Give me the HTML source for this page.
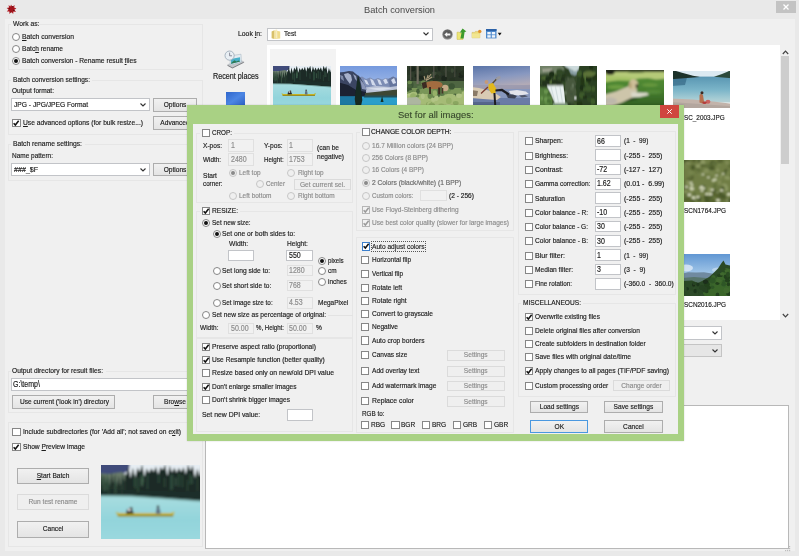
<!DOCTYPE html>
<html><head><meta charset="utf-8"><title>Batch conversion</title>
<style>
html,body{margin:0;padding:0;background:#f0f0f0;overflow:hidden}
#root{filter:blur(0.35px);position:relative;width:799px;height:556px;overflow:hidden;background:#f0f0f0;font-family:"Liberation Sans",sans-serif;font-size:7.8px;color:#1c1c1c}
#root div,#root span,#root svg.abs{position:absolute;box-sizing:border-box}
.t{-webkit-text-stroke:0.18px;white-space:pre;transform-origin:0 50%;line-height:10px;height:10px}
.bt{text-align:center;transform-origin:50% 50%}
.dist{color:#8c8c8c}
.cb{width:8.2px;height:8.2px;border:1px solid #868686;background:#fff}
.cb.dis{border-color:#b5b5b5;background:#f2f2f2}
.cb.foc{border-color:#3c7fcc}
.rb{width:8px;height:8px;border:1px solid #868686;background:#fff;border-radius:50%}
.rb.dis{border-color:#c6c6c6;background:#efefef}
.rb i{position:absolute;left:1.1px;top:1.1px;width:3.8px;height:3.8px;border-radius:50%}
.btn{border:1px solid #adadad;background:linear-gradient(#f1f1f1,#e4e4e4)}
.btn.dis{border-color:#dbdbdb;background:#efefef}
.btn.def{border-color:#4a98e0}
.in{border:1px solid #c2c4c8;background:#fff}
.in.dis{border-color:#e0e0e0;background:#f1f1f1}
.combo.dis{background:#e6e6e6;border-color:#c4c4c4}
.gb{border:1px solid #e6e6e6}
u{text-decoration:underline}
#t0{transform:scaleX(0.965)}
#t1{transform:scaleX(0.865)}
#t2{transform:scaleX(0.869)}
#t3{transform:scaleX(0.844)}
#t4{transform:scaleX(0.858)}
#t5{transform:scaleX(0.846)}
#t6{transform:scaleX(0.843)}
#t7{transform:scaleX(0.856)}
#t8{transform:scaleX(0.846)}
#t9{transform:scaleX(0.860)}
#t10{transform:scaleX(0.846)}
#t11{transform:scaleX(0.865)}
#t12{transform:scaleX(0.830)}
#t13{transform:scaleX(0.914)}
#t14{transform:scaleX(0.846)}
#t15{transform:scaleX(0.846)}
#t16{transform:scaleX(0.846)}
#t17{transform:scaleX(0.846)}
#t18{transform:scaleX(0.857)}
#t19{transform:scaleX(0.856)}
#t20{transform:scaleX(0.852)}
#t21{transform:scaleX(0.846)}
#t22{transform:scaleX(0.846)}
#t23{transform:scaleX(0.846)}
#t24{transform:scaleX(0.878)}
#t25{transform:scaleX(0.846)}
#t26{transform:scaleX(0.839)}
#t27{transform:scaleX(0.794)}
#t28{transform:scaleX(0.800)}
#t29{transform:scaleX(0.800)}
#t30{transform:scaleX(0.984)}
#t31{transform:scaleX(0.810)}
#t32{transform:scaleX(0.843)}
#t33{transform:scaleX(0.846)}
#t34{transform:scaleX(0.857)}
#t35{transform:scaleX(0.846)}
#t36{transform:scaleX(0.846)}
#t37{transform:scaleX(0.842)}
#t38{transform:scaleX(0.814)}
#t39{transform:scaleX(0.846)}
#t40{transform:scaleX(0.797)}
#t41{transform:scaleX(0.846)}
#t42{transform:scaleX(0.846)}
#t43{transform:scaleX(0.803)}
#t44{transform:scaleX(0.830)}
#t45{transform:scaleX(0.820)}
#t46{transform:scaleX(0.812)}
#t47{transform:scaleX(0.846)}
#t48{transform:scaleX(0.833)}
#t49{transform:scaleX(0.830)}
#t50{transform:scaleX(0.857)}
#t51{transform:scaleX(0.832)}
#t52{transform:scaleX(0.864)}
#t53{transform:scaleX(0.868)}
#t54{transform:scaleX(0.846)}
#t55{transform:scaleX(0.846)}
#t56{transform:scaleX(0.787)}
#t57{transform:scaleX(0.826)}
#t58{transform:scaleX(0.838)}
#t59{transform:scaleX(0.860)}
#t60{transform:scaleX(0.846)}
#t61{transform:scaleX(0.841)}
#t62{transform:scaleX(0.846)}
#t63{transform:scaleX(0.818)}
#t64{transform:scaleX(0.846)}
#t65{transform:scaleX(0.832)}
#t66{transform:scaleX(0.851)}
#t67{transform:scaleX(0.837)}
#t68{transform:scaleX(0.846)}
#t69{transform:scaleX(0.778)}
#t70{transform:scaleX(0.846)}
#t71{transform:scaleX(0.846)}
#t72{transform:scaleX(0.851)}
#t73{transform:scaleX(0.850)}
#t74{transform:scaleX(0.874)}
#t75{transform:scaleX(0.838)}
#t76{transform:scaleX(0.847)}
#t77{transform:scaleX(0.878)}
#t78{transform:scaleX(0.855)}
#t79{transform:scaleX(0.844)}
#t80{transform:scaleX(0.834)}
#t81{transform:scaleX(0.827)}
#t82{transform:scaleX(0.855)}
#t83{transform:scaleX(0.796)}
#t84{transform:scaleX(0.845)}
#t85{transform:scaleX(0.839)}
#t86{transform:scaleX(0.843)}
#t87{transform:scaleX(0.847)}
#t88{transform:scaleX(0.825)}
#t89{transform:scaleX(0.822)}
#t90{transform:scaleX(0.844)}
#t91{transform:scaleX(0.858)}
#t92{transform:scaleX(0.853)}
#t93{transform:scaleX(0.845)}
#t94{transform:scaleX(0.847)}
#t95{transform:scaleX(0.834)}
#t96{transform:scaleX(0.848)}
#t97{transform:scaleX(0.849)}
#t98{transform:scaleX(0.877)}
#t99{transform:scaleX(0.846)}
#t100{transform:scaleX(0.846)}
#t101{transform:scaleX(0.846)}
#t102{transform:scaleX(0.846)}
#t103{transform:scaleX(0.811)}
#t104{transform:scaleX(0.840)}
#t105{transform:scaleX(0.840)}
#t106{transform:scaleX(0.840)}
#t107{transform:scaleX(0.840)}
#t108{transform:scaleX(0.840)}
#t109{transform:scaleX(0.878)}
#t110{transform:scaleX(0.846)}
#t111{transform:scaleX(0.825)}
#t112{transform:scaleX(0.846)}
#t113{transform:scaleX(0.895)}
#t114{transform:scaleX(0.885)}
#t115{transform:scaleX(0.846)}
#t116{transform:scaleX(0.895)}
#t117{transform:scaleX(0.836)}
#t118{transform:scaleX(0.846)}
#t119{transform:scaleX(0.905)}
#t120{transform:scaleX(0.844)}
#t121{transform:scaleX(0.895)}
#t122{transform:scaleX(0.843)}
#t123{transform:scaleX(0.846)}
#t124{transform:scaleX(0.895)}
#t125{transform:scaleX(0.838)}
#t126{transform:scaleX(0.846)}
#t127{transform:scaleX(0.895)}
#t128{transform:scaleX(0.849)}
#t129{transform:scaleX(0.846)}
#t130{transform:scaleX(0.895)}
#t131{transform:scaleX(0.911)}
#t132{transform:scaleX(0.846)}
#t133{transform:scaleX(0.825)}
#t134{transform:scaleX(0.851)}
#t135{transform:scaleX(0.846)}
#t136{transform:scaleX(0.851)}
#t137{transform:scaleX(0.813)}
#t138{transform:scaleX(0.857)}
#t139{transform:scaleX(0.847)}
#t140{transform:scaleX(0.833)}
#t141{transform:scaleX(0.850)}
#t142{transform:scaleX(0.843)}
#t143{transform:scaleX(0.862)}
#t144{transform:scaleX(0.866)}
#t145{transform:scaleX(0.841)}
#t146{transform:scaleX(0.846)}
#t147{transform:scaleX(0.846)}
#t148{transform:scaleX(0.846)}
#t149{transform:scaleX(0.846)}
#t150{transform:scaleX(0.846)}
</style></head>
<body>
<div id="root">
<div class="" style="left:0px;top:0px;width:799px;height:556px;background:#e9e9e9"></div>
<div class="" style="left:4.5px;top:19px;width:790px;height:532px;background:#f0f0f0"></div>
<span class="t" id="t0" style="left:364px;top:5px;color:#4a4a4a;font-size:9.6px;-webkit-text-stroke:0;">Batch conversion</span>
<div class="" style="left:776px;top:1px;width:20px;height:12px;background:#c3c3c3"></div>
<svg class="abs" style="left:783px;top:4px" width="6" height="6" viewBox="0 0 6 6"><path d="M0.5 0.5L5.5 5.5M5.5 0.5L0.5 5.5" stroke="#fff" stroke-width="1.3"/></svg>
<svg class="abs" style="left:6px;top:4px" width="11" height="11" viewBox="0 0 11 11"><path d="M5 0.6L6.4 2.8L8.6 1L8.2 3.6L10.4 4.6L8.4 5.8L10 8L7.4 7.4L7.2 10L5.4 8L3.4 10L3.4 7.4L0.8 7.6L2.6 5.6L0.6 4L3 3.6L2.6 1L4.4 2.6Z" fill="#b31c24"/><circle cx="5.4" cy="5.2" r="2.6" fill="#a3141c"/><circle cx="3.2" cy="4.6" r="0.7" fill="#5a0c10"/><circle cx="7.8" cy="6.4" r="0.7" fill="#5a0c10"/><circle cx="5" cy="8" r="0.6" fill="#5a0c10"/><circle cx="6.6" cy="2.6" r="0.6" fill="#5a0c10"/></svg>
<div class="gb" style="left:8px;top:24px;width:195px;height:46px;"></div>
<div class="" style="left:11px;top:19px;width:27px;height:10px;background:#f0f0f0"></div>
<span class="t" id="t1" style="left:13px;top:19px;">Work as:</span>
<div class="rb" style="left:12px;top:33px"></div>
<span class="t" id="t2" style="left:22px;top:32px;"><u>B</u>atch conversion</span>
<div class="rb" style="left:12px;top:44.7px"></div>
<span class="t" id="t3" style="left:22px;top:43.7px;">Batc<u>h</u> rename</span>
<div class="rb" style="left:12px;top:57px"><i style="background:#111"></i></div>
<span class="t" id="t4" style="left:22px;top:56px;">Batch conversion - Rename result <u>f</u>iles</span>
<div class="gb" style="left:8px;top:80px;width:195px;height:55px;"></div>
<div class="" style="left:11px;top:75px;width:81px;height:10px;background:#f0f0f0"></div>
<span class="t" id="t5" style="left:13px;top:75px;">Batch conversion settings:</span>
<span class="t" id="t6" style="left:12px;top:86px;">Output format:</span>
<div class="in combo" style="left:11px;top:98.3px;width:139px;height:13.2px;"></div>
<svg class="abs" style="left:140px;top:103.2px" width="6" height="4" viewBox="0 0 6 4"><path d="M0.5 0.5 L3 3 L5.5 0.5" fill="none" stroke="#333" stroke-width="1.1"/></svg>
<span class="t" id="t7" style="left:13.5px;top:100.1px;">JPG - JPG/JPEG Format</span>
<div class="btn" style="left:153px;top:97.5px;width:44px;height:14px;"></div>
<span class="t bt" id="t8" style="left:153px;top:99.5px;width:44px;">Options</span>
<div class="cb" style="left:12.4px;top:119.2px"><svg width="8.2" height="8.2" viewBox="0 0 8 8" style="position:absolute;left:-1px;top:-1px"><path d="M1.6 4.1 L3.3 5.9 L6.5 1.8" fill="none" stroke="#111" stroke-width="1.5"/></svg></div>
<span class="t" id="t9" style="left:23px;top:118px;"><u>U</u>se advanced options (for bulk resize...)</span>
<div class="btn" style="left:153px;top:116px;width:44px;height:14px;"></div>
<span class="t bt" id="t10" style="left:153px;top:118px;width:44px;">Advanced</span>
<div class="gb" style="left:8px;top:144px;width:195px;height:36.5px;"></div>
<div class="" style="left:11px;top:139px;width:74px;height:10px;background:#f0f0f0"></div>
<span class="t" id="t11" style="left:13px;top:139px;">Batch rename settings:</span>
<span class="t" id="t12" style="left:12px;top:151.2px;">Name pattern:</span>
<div class="in combo" style="left:11px;top:163px;width:139px;height:13.2px;"></div>
<svg class="abs" style="left:140px;top:167.9px" width="6" height="4" viewBox="0 0 6 4"><path d="M0.5 0.5 L3 3 L5.5 0.5" fill="none" stroke="#333" stroke-width="1.1"/></svg>
<span class="t" id="t13" style="left:13.5px;top:164.8px;">###_$F</span>
<div class="btn" style="left:153px;top:162.7px;width:44px;height:13.8px;"></div>
<span class="t bt" id="t14" style="left:153px;top:164.6px;width:44px;">Options</span>
<div class="in" style="left:11px;top:377.5px;width:187px;height:13.5px;"></div>
<span class="t" id="t15" style="left:13.2px;top:378.95px;font-size:8.3px;">G:\temp\</span>
<div class="btn" style="left:12px;top:395.3px;width:103px;height:13.7px;"></div>
<span class="t bt" id="t16" style="left:12px;top:397.15px;width:103px;">Use current ('look in') directory</span>
<div class="btn" style="left:153px;top:395.3px;width:44px;height:13.7px;"></div>
<span class="t bt" id="t17" style="left:153px;top:397.15px;width:44px;">Bro<u>w</u>se</span>
<div class="gb" style="left:8px;top:371px;width:195px;height:42px;"></div>
<div class="" style="left:11px;top:366px;width:95px;height:10px;background:#f0f0f0"></div>
<div class="gb" style="left:8px;top:421.5px;width:195px;height:125.5px;"></div>
<span class="t" id="t18" style="left:12px;top:366px;">Output directory for result files:</span>
<div class="cb" style="left:12.4px;top:427.9px"></div>
<span class="t" id="t19" style="left:23px;top:427px;">Include subdirectories (for 'Add all'; not saved on e<u>x</u>it)</span>
<div class="cb" style="left:12.4px;top:442.9px"><svg width="8.2" height="8.2" viewBox="0 0 8 8" style="position:absolute;left:-1px;top:-1px"><path d="M1.6 4.1 L3.3 5.9 L6.5 1.8" fill="none" stroke="#111" stroke-width="1.5"/></svg></div>
<span class="t" id="t20" style="left:23px;top:442px;">Show <u>P</u>review image</span>
<div class="btn" style="left:17.3px;top:467.5px;width:72px;height:16.1px;"></div>
<span class="t bt" id="t21" style="left:17.3px;top:470.55px;width:72px;"><u>S</u>tart Batch</span>
<div class="btn dis" style="left:17.3px;top:494.3px;width:72px;height:16px;"></div>
<span class="t bt dist" id="t22" style="left:17.3px;top:497.3px;width:72px;">Run test rename</span>
<div class="btn" style="left:17.3px;top:521.3px;width:72px;height:16.3px;"></div>
<span class="t bt" id="t23" style="left:17.3px;top:524.45px;width:72px;">Cancel</span>
<svg class="abs" style="left:101px;top:465px;overflow:hidden" width="99" height="74" viewBox="0 0 99 74" preserveAspectRatio="none"><defs><filter id="pf1" x="-5%" y="-5%" width="110%" height="110%"><feGaussianBlur stdDeviation="0.8"/></filter></defs><g filter="url(#pf1)"><rect x="-5" y="-5" width="110" height="40" fill="#e6edf3"/><polygon points="-5,-5 29,-5 28,5 22,9 -5,10" fill="#3f4c7a"/><polygon points="-5,8 8,9 21,7 27,12 27,31 -5,31" fill="#6a7c6c"/><polygon points="-2.0,33.0 -2.0,20.8 -0.2,8.4 1.6,22.1 3.4,9.2 5.2,19.3 7.0,10.8 8.8,21.8 10.6,7.1 12.4,18.4 14.2,8.6 16.0,21.7 17.8,10.0 19.6,20.8 21.4,9.0 23.2,17.0 25.0,7.8 26.8,22.8 28.6,7.8 27.0,11.0 27.0,33.0" fill="#22332c"/><polygon points="25.0,36.0 25.0,11.2 27.3,2.0 29.6,13.3 31.9,2.7 34.2,12.9 36.5,2.5 38.8,6.9 41.1,-0.4 43.4,11.8 45.7,3.3 48.0,7.9 50.3,3.1 52.6,7.1 54.9,1.4 57.2,9.7 59.5,1.7 61.8,5.1 64.1,-0.4 66.4,11.0 68.7,0.6 71.0,7.7 73.3,2.6 75.6,7.7 77.9,2.7 80.2,6.9 82.5,2.0 84.8,9.6 87.1,-0.5 89.4,5.8 91.7,0.3 94.0,13.5 96.3,3.4 98.6,11.4 100.9,0.7 101.0,5.5 101.0,36.0" fill="#1c2b27"/><polygon points="-5,24 101,27 101,36 -5,31" fill="#1e2e29"/><rect x="45.8" y="9.1" width="1.5" height="14.9" fill="#3a5a46" opacity="0.55"/><rect x="33.5" y="12.8" width="1.6" height="10.7" fill="#466a52" opacity="0.55"/><rect x="69.3" y="9.4" width="2.0" height="15.6" fill="#466a52" opacity="0.55"/><rect x="41.8" y="8.4" width="1.2" height="9.1" fill="#466a52" opacity="0.55"/><rect x="6.3" y="14.3" width="2.0" height="15.1" fill="#2f4a3a" opacity="0.55"/><rect x="20.3" y="14.3" width="1.3" height="15.1" fill="#2f4a3a" opacity="0.55"/><rect x="90.2" y="10.7" width="1.6" height="8.3" fill="#466a52" opacity="0.55"/><rect x="87.8" y="8.4" width="2.2" height="11.0" fill="#2f4a3a" opacity="0.55"/><rect x="13.8" y="13.9" width="1.3" height="14.8" fill="#466a52" opacity="0.55"/><rect x="0.4" y="9.6" width="2.1" height="14.8" fill="#2f4a3a" opacity="0.55"/><rect x="0.8" y="12.3" width="1.1" height="8.1" fill="#3a5a46" opacity="0.55"/><rect x="56.7" y="9.6" width="1.8" height="8.6" fill="#3a5a46" opacity="0.55"/><rect x="63.2" y="12.6" width="1.1" height="9.4" fill="#466a52" opacity="0.55"/><rect x="71.2" y="10.2" width="1.1" height="13.5" fill="#3a5a46" opacity="0.55"/><rect x="73.8" y="12.6" width="2.0" height="8.3" fill="#466a52" opacity="0.55"/><rect x="39.8" y="9.3" width="2.3" height="12.0" fill="#466a52" opacity="0.55"/><rect x="36.2" y="12.7" width="1.9" height="14.2" fill="#3a5a46" opacity="0.55"/><rect x="85.9" y="15.1" width="1.2" height="10.9" fill="#3a5a46" opacity="0.55"/><rect x="39.8" y="12.6" width="2.4" height="8.1" fill="#466a52" opacity="0.55"/><rect x="32.5" y="9.7" width="1.6" height="11.6" fill="#2f4a3a" opacity="0.55"/><rect x="80.7" y="10.3" width="1.4" height="12.1" fill="#3a5a46" opacity="0.55"/><rect x="2.5" y="14.5" width="2.1" height="12.0" fill="#466a52" opacity="0.55"/><rect x="77.0" y="8.5" width="1.8" height="13.2" fill="#3a5a46" opacity="0.55"/><rect x="95.4" y="11.0" width="1.6" height="14.9" fill="#2f4a3a" opacity="0.55"/><rect x="13.8" y="13.5" width="1.4" height="15.0" fill="#3a5a46" opacity="0.55"/><rect x="5.0" y="9.4" width="2.4" height="15.6" fill="#3a5a46" opacity="0.55"/><defs><linearGradient id="wg" x1="0" y1="0" x2="0" y2="1"><stop offset="0" stop-color="#a9dde0"/><stop offset="0.5" stop-color="#92d4db"/><stop offset="1" stop-color="#9ddae0"/></linearGradient></defs><polygon points="-5,30 30,30.5 60,32.5 101,35.5 101,80 -5,80" fill="url(#wg)"/><polygon points="-5,30 30,30.5 60,32.5 101,35.5 101,37 60,34 30,32 -5,31.5" fill="#5f8c84" opacity="0.7"/><path d="M14.5 46.8 L18 48 L70 48 L73.8 46.6 L72 51 L17 51.2 Z" fill="#c5b324"/><path d="M16 50.3 L72.5 50.1 L72 51.4 L17 51.6 Z" fill="#8a7d1c"/><path d="M25 49 L26 44.5 L29 42.8 L31 44.5 L33 48.5 Z" fill="#26262c"/><circle cx="30.2" cy="43.4" r="1.3" fill="#3a2a22"/><rect x="27" y="43.6" width="2.6" height="2.4" fill="#e8e8e8"/><path d="M54.8 49 L55.2 44 L57 42.6 L59 44 L59.6 49 Z" fill="#5f7384"/><circle cx="57" cy="41.8" r="1.3" fill="#34302c"/></g></svg>
<span class="t" id="t24" style="left:238px;top:29px;">Look <u>i</u>n:</span>
<div class="in combo" style="left:267px;top:27.5px;width:165.5px;height:13px;"></div>
<svg class="abs" style="left:422.5px;top:32.3px" width="6" height="4" viewBox="0 0 6 4"><path d="M0.5 0.5 L3 3 L5.5 0.5" fill="none" stroke="#333" stroke-width="1.1"/></svg>
<span class="t" id="t25" style="left:284px;top:29px;">Test</span>
<div class="" style="left:204px;top:45px;width:61px;height:277px;background:#f0f0f0"></div>
<span class="t" id="t26" style="left:212.5px;top:70.5px;font-size:8.6px;">Recent places</span>
<svg class="abs" style="left:441.5px;top:28.8px" width="11" height="11" viewBox="0 0 11 11"><defs><radialGradient id="bk" cx="0.5" cy="0.45" r="0.55"><stop offset="0" stop-color="#444"/><stop offset="0.7" stop-color="#666"/><stop offset="1" stop-color="#b0b0b0"/></radialGradient></defs><circle cx="5.5" cy="5.5" r="5.3" fill="url(#bk)"/><path d="M2.4 5.5 L5.2 3 L5.2 4.6 L8.4 4.6 L8.4 6.4 L5.2 6.4 L5.2 8 Z" fill="#f4f4f4"/></svg>
<svg class="abs" style="left:455.5px;top:28px" width="12" height="12" viewBox="0 0 12 12"><path d="M1 4.2 L3.4 4.2 L4 5 L7 5 L7 11.4 L1 11.4 Z" fill="#ece678" stroke="#c8b84a" stroke-width="0.5"/><path d="M6.6 0.6 L10.4 3.6 L8.6 4 L7.6 10.6 L4.4 10.6 L5.6 4.4 L3.8 4.6 Z" fill="#3c9a2c"/></svg>
<svg class="abs" style="left:471px;top:29px" width="12" height="11" viewBox="0 0 12 11"><path d="M1 3.4 L3.6 3.4 L4.4 2.4 L8.8 2.4 L8.8 8.8 L1 8.8 Z" fill="#ecdc7a" stroke="#cdb556" stroke-width="0.5"/><path d="M1 4.6 L8.8 4.6 L8.8 8.8 L1 8.8Z" fill="#f2e692"/><circle cx="8.8" cy="2.4" r="1.7" fill="#e2902c"/></svg>
<svg class="abs" style="left:486px;top:29.3px" width="16" height="10" viewBox="0 0 16 10"><rect x="0" y="0" width="10.5" height="9.4" fill="#4c88cc"/><rect x="0" y="0" width="10.5" height="2" fill="#2c62a8"/><rect x="1.3" y="3" width="3.4" height="2.4" fill="#eef4fc"/><rect x="5.8" y="3" width="3.4" height="2.4" fill="#eef4fc"/><rect x="1.3" y="6.2" width="3.4" height="2.4" fill="#eef4fc"/><rect x="5.8" y="6.2" width="3.4" height="2.4" fill="#eef4fc"/><path d="M11.8 3.8 L15.6 3.8 L13.7 6.4 Z" fill="#111"/></svg>
<svg class="abs" style="left:270.5px;top:28.6px" width="10" height="11" viewBox="0 0 10 11"><path d="M0.6 2.4 L3.4 1.2 L3.4 10 L0.6 9.2 Z" fill="#d8c06a"/><path d="M3.4 1.2 L9.2 2.6 L9.2 9.4 L3.4 10 Z" fill="#f0dc8c"/><path d="M4.4 0.8 L6.2 0.4 L6.4 9 L4.6 9.6Z" fill="#f6ecc0"/></svg>
<svg class="abs" style="left:224px;top:50px" width="21" height="20" viewBox="0 0 21 20"><path d="M3 15.4 L15 10.6 L20.4 12.6 L8.4 18.6 Z" fill="#7b7d80"/><path d="M3 14.4 L15 9.6 L20.4 11.6 L8.4 17.6 Z" fill="#c3c6ca"/><path d="M5.6 6 L17 4.2 L17.4 12 L6.4 15 Z" fill="#e4ecf2" stroke="#9fb0bd" stroke-width="0.5"/><path d="M6.8 9 L16 7.2 L16.2 11.4 L7.2 13.8 Z" fill="#48b0c8"/><path d="M7 13 L10.4 10.2 L12.6 11.6 L14.4 10.4 L16.2 11.4 L7.2 13.8Z" fill="#2f7a56"/><circle cx="5.6" cy="5.6" r="4.6" fill="#e9eff4" stroke="#97a6b4" stroke-width="0.8"/><path d="M5.6 2.6 L5.6 5.8 L8 5.8" fill="none" stroke="#667" stroke-width="0.7"/></svg>
<svg class="abs" style="left:225.6px;top:92.2px" width="19.4" height="14" viewBox="0 0 19.4 14"><defs><linearGradient id="dk" x1="0" y1="0" x2="1" y2="1"><stop offset="0" stop-color="#2f66cc"/><stop offset="0.5" stop-color="#4c86e4"/><stop offset="1" stop-color="#2a5cc0"/></linearGradient></defs><rect x="0" y="0" width="19.4" height="14" fill="url(#dk)"/></svg>
<div class="" style="left:267px;top:45px;width:513px;height:275px;background:#fff"></div>
<div class="" style="left:269.5px;top:49px;width:66px;height:76px;background:#f3f3f3"></div>
<div class="" style="left:780.5px;top:56px;width:8.5px;height:108px;background:#cdcdcd"></div>
<svg class="abs" style="left:781.5px;top:49.5px" width="7" height="5" viewBox="0 0 7 5"><path d="M0.8 4 L3.5 1.2 L6.2 4" fill="none" stroke="#444" stroke-width="1.2"/></svg>
<svg class="abs" style="left:781.5px;top:312.5px" width="7" height="5" viewBox="0 0 7 5"><path d="M0.8 1 L3.5 3.8 L6.2 1" fill="none" stroke="#444" stroke-width="1.2"/></svg>
<svg class="abs" style="left:784px;top:545px" width="7" height="7" viewBox="0 0 7 7"><g fill="#bdbdbd"><rect x="5" y="1" width="1.2" height="1.2"/><rect x="3" y="3" width="1.2" height="1.2"/><rect x="5" y="3" width="1.2" height="1.2"/><rect x="1" y="5" width="1.2" height="1.2"/><rect x="3" y="5" width="1.2" height="1.2"/><rect x="5" y="5" width="1.2" height="1.2"/></g></svg>
<svg class="abs" style="left:273.2px;top:66px;overflow:hidden" width="57.5" height="43" viewBox="0 0 99 74" preserveAspectRatio="none"><defs><filter id="pf2" x="-5%" y="-5%" width="110%" height="110%"><feGaussianBlur stdDeviation="1.3"/></filter></defs><g filter="url(#pf2)"><rect x="-5" y="-5" width="110" height="40" fill="#e6edf3"/><polygon points="-5,-5 29,-5 28,5 22,9 -5,10" fill="#3f4c7a"/><polygon points="-5,8 8,9 21,7 27,12 27,31 -5,31" fill="#6a7c6c"/><polygon points="-2.0,33.0 -2.0,20.8 -0.2,8.4 1.6,22.1 3.4,9.2 5.2,19.3 7.0,10.8 8.8,21.8 10.6,7.1 12.4,18.4 14.2,8.6 16.0,21.7 17.8,10.0 19.6,20.8 21.4,9.0 23.2,17.0 25.0,7.8 26.8,22.8 28.6,7.8 27.0,11.0 27.0,33.0" fill="#22332c"/><polygon points="25.0,36.0 25.0,11.2 27.3,2.0 29.6,13.3 31.9,2.7 34.2,12.9 36.5,2.5 38.8,6.9 41.1,-0.4 43.4,11.8 45.7,3.3 48.0,7.9 50.3,3.1 52.6,7.1 54.9,1.4 57.2,9.7 59.5,1.7 61.8,5.1 64.1,-0.4 66.4,11.0 68.7,0.6 71.0,7.7 73.3,2.6 75.6,7.7 77.9,2.7 80.2,6.9 82.5,2.0 84.8,9.6 87.1,-0.5 89.4,5.8 91.7,0.3 94.0,13.5 96.3,3.4 98.6,11.4 100.9,0.7 101.0,5.5 101.0,36.0" fill="#1c2b27"/><polygon points="-5,24 101,27 101,36 -5,31" fill="#1e2e29"/><rect x="45.8" y="9.1" width="1.5" height="14.9" fill="#3a5a46" opacity="0.55"/><rect x="33.5" y="12.8" width="1.6" height="10.7" fill="#466a52" opacity="0.55"/><rect x="69.3" y="9.4" width="2.0" height="15.6" fill="#466a52" opacity="0.55"/><rect x="41.8" y="8.4" width="1.2" height="9.1" fill="#466a52" opacity="0.55"/><rect x="6.3" y="14.3" width="2.0" height="15.1" fill="#2f4a3a" opacity="0.55"/><rect x="20.3" y="14.3" width="1.3" height="15.1" fill="#2f4a3a" opacity="0.55"/><rect x="90.2" y="10.7" width="1.6" height="8.3" fill="#466a52" opacity="0.55"/><rect x="87.8" y="8.4" width="2.2" height="11.0" fill="#2f4a3a" opacity="0.55"/><rect x="13.8" y="13.9" width="1.3" height="14.8" fill="#466a52" opacity="0.55"/><rect x="0.4" y="9.6" width="2.1" height="14.8" fill="#2f4a3a" opacity="0.55"/><rect x="0.8" y="12.3" width="1.1" height="8.1" fill="#3a5a46" opacity="0.55"/><rect x="56.7" y="9.6" width="1.8" height="8.6" fill="#3a5a46" opacity="0.55"/><rect x="63.2" y="12.6" width="1.1" height="9.4" fill="#466a52" opacity="0.55"/><rect x="71.2" y="10.2" width="1.1" height="13.5" fill="#3a5a46" opacity="0.55"/><rect x="73.8" y="12.6" width="2.0" height="8.3" fill="#466a52" opacity="0.55"/><rect x="39.8" y="9.3" width="2.3" height="12.0" fill="#466a52" opacity="0.55"/><rect x="36.2" y="12.7" width="1.9" height="14.2" fill="#3a5a46" opacity="0.55"/><rect x="85.9" y="15.1" width="1.2" height="10.9" fill="#3a5a46" opacity="0.55"/><rect x="39.8" y="12.6" width="2.4" height="8.1" fill="#466a52" opacity="0.55"/><rect x="32.5" y="9.7" width="1.6" height="11.6" fill="#2f4a3a" opacity="0.55"/><rect x="80.7" y="10.3" width="1.4" height="12.1" fill="#3a5a46" opacity="0.55"/><rect x="2.5" y="14.5" width="2.1" height="12.0" fill="#466a52" opacity="0.55"/><rect x="77.0" y="8.5" width="1.8" height="13.2" fill="#3a5a46" opacity="0.55"/><rect x="95.4" y="11.0" width="1.6" height="14.9" fill="#2f4a3a" opacity="0.55"/><rect x="13.8" y="13.5" width="1.4" height="15.0" fill="#3a5a46" opacity="0.55"/><rect x="5.0" y="9.4" width="2.4" height="15.6" fill="#3a5a46" opacity="0.55"/><defs><linearGradient id="wg" x1="0" y1="0" x2="0" y2="1"><stop offset="0" stop-color="#a9dde0"/><stop offset="0.5" stop-color="#92d4db"/><stop offset="1" stop-color="#9ddae0"/></linearGradient></defs><polygon points="-5,30 30,30.5 60,32.5 101,35.5 101,80 -5,80" fill="url(#wg)"/><polygon points="-5,30 30,30.5 60,32.5 101,35.5 101,37 60,34 30,32 -5,31.5" fill="#5f8c84" opacity="0.7"/><path d="M14.5 46.8 L18 48 L70 48 L73.8 46.6 L72 51 L17 51.2 Z" fill="#c5b324"/><path d="M16 50.3 L72.5 50.1 L72 51.4 L17 51.6 Z" fill="#8a7d1c"/><path d="M25 49 L26 44.5 L29 42.8 L31 44.5 L33 48.5 Z" fill="#26262c"/><circle cx="30.2" cy="43.4" r="1.3" fill="#3a2a22"/><rect x="27" y="43.6" width="2.6" height="2.4" fill="#e8e8e8"/><path d="M54.8 49 L55.2 44 L57 42.6 L59 44 L59.6 49 Z" fill="#5f7384"/><circle cx="57" cy="41.8" r="1.3" fill="#34302c"/></g></svg>
<svg class="abs" style="left:340.2px;top:66px;overflow:hidden" width="57.1" height="43" viewBox="0 0 57 43" preserveAspectRatio="none"><defs><filter id="pf3" x="-5%" y="-5%" width="110%" height="110%"><feGaussianBlur stdDeviation="0.6"/></filter></defs><g filter="url(#pf3)"><defs><linearGradient id="sk2" x1="0" y1="0" x2="0" y2="1"><stop offset="0" stop-color="#6f95dc"/><stop offset="1" stop-color="#adc3ec"/></linearGradient></defs><rect x="-3" y="-3" width="63" height="30" fill="url(#sk2)"/><polygon points="18,12 22,10.5 26,13 30,11.5 34,13.5 38,12 42,13.5 46,12 49,13 53,10.5 57,12 60,13 60,28 18,28" fill="#7c8cb4"/><polygon points="48,13 53,10.5 57,13 60,15 60,24 50,22" fill="#66769e"/><polygon points="24,13.5 27,14.5 29,19 26,18" fill="#d2daec"/><polygon points="30,12.5 33,14 36,20 32,19" fill="#d2daec"/><polygon points="37,13 40,14 42,19 39,18.5" fill="#d2daec"/><polygon points="43,14 46,12.5 48,17 45,18" fill="#d2daec"/><polygon points="51,14 54,12 56,17 53,18" fill="#d2daec"/><polygon points="21,15 23,16 25,21 22,20" fill="#d2daec"/><polygon points="22,22 36,20 50,21 60,19.5 60,27 22,28" fill="#bcc4d8"/><polygon points="28,22.5 44,21.5 52,22.5 40,24.5" fill="#d9dfec"/><polygon points="-3,6.5 4,6 9,5 13,5.5 16,8 20,11 23,16 26,22 26,40 -3,40" fill="#3a4562"/><polygon points="-3,16 8,19 16,24 26,26 26,40 -3,40" fill="#1b2130"/><polygon points="4,8 8,7 11,9 12,14 10,18 7,14 5,11" fill="#a6b0ca"/><polygon points="13,8 16,10 17,15 15,13" fill="#97a2be"/><polygon points="0,9 3,10 4,15 1,13" fill="#7f8aa8"/><polygon points="20,13 24,18 27,24 22,23" fill="#8b97ba"/><polygon points="25,27 40,25.5 60,23 60,32 25,32" fill="#3c4634"/><rect x="-3" y="30.5" width="63" height="16" fill="#2b9eca"/><rect x="-3" y="30.5" width="19" height="16" fill="#1c78a2"/><rect x="24" y="29.5" width="36" height="2" fill="#24505a"/><polygon points="18,9 20.3,18 21.3,26 22.3,34 21,40 15.7,40 14.7,33 15.7,25 16.7,17" fill="#182a22"/><polygon points="42,30 43.5,36 40.5,36" fill="#183028"/></g></svg>
<svg class="abs" style="left:406.7px;top:66px;overflow:hidden" width="57.3" height="43" viewBox="0 0 57 43" preserveAspectRatio="none"><defs><filter id="pf4" x="-5%" y="-5%" width="110%" height="110%"><feGaussianBlur stdDeviation="0.7"/></filter></defs><g filter="url(#pf4)"><rect x="-3" y="-3" width="63" height="49" fill="#2a3428"/><ellipse cx="0.7" cy="1.7" rx="2.1" ry="2.5" fill="#2f3b2c"/><ellipse cx="54.2" cy="8.0" rx="2.6" ry="1.7" fill="#1f281e"/><ellipse cx="37.7" cy="2.0" rx="2.3" ry="2.2" fill="#263024"/><ellipse cx="11.7" cy="8.9" rx="1.7" ry="2.7" fill="#263024"/><ellipse cx="19.5" cy="3.1" rx="2.1" ry="2.4" fill="#2f3b2c"/><ellipse cx="12.0" cy="3.3" rx="2.4" ry="2.3" fill="#1f281e"/><ellipse cx="47.8" cy="5.3" rx="1.8" ry="2.8" fill="#263024"/><ellipse cx="1.7" cy="11.0" rx="2.8" ry="2.5" fill="#2f3b2c"/><ellipse cx="11.8" cy="6.5" rx="2.1" ry="2.0" fill="#2f3b2c"/><ellipse cx="27.5" cy="4.0" rx="1.9" ry="2.4" fill="#263024"/><ellipse cx="36.9" cy="12.5" rx="2.9" ry="3.0" fill="#1f281e"/><ellipse cx="45.0" cy="4.6" rx="1.8" ry="2.4" fill="#3a4836"/><ellipse cx="5.3" cy="2.9" rx="2.9" ry="2.4" fill="#1f281e"/><ellipse cx="38.2" cy="4.3" rx="2.0" ry="2.8" fill="#2f3b2c"/><ellipse cx="6.5" cy="3.0" rx="2.0" ry="2.1" fill="#1f281e"/><ellipse cx="32.0" cy="1.8" rx="1.6" ry="3.0" fill="#1f281e"/><ellipse cx="54.8" cy="3.0" rx="1.7" ry="3.0" fill="#2f3b2c"/><ellipse cx="27.1" cy="7.5" rx="2.7" ry="1.9" fill="#3a4836"/><ellipse cx="55.9" cy="7.4" rx="2.4" ry="2.8" fill="#263024"/><ellipse cx="7.9" cy="10.9" rx="2.5" ry="3.0" fill="#1f281e"/><ellipse cx="14.5" cy="11.5" rx="3.0" ry="2.0" fill="#1f281e"/><ellipse cx="5.5" cy="8.7" rx="2.2" ry="3.0" fill="#2f3b2c"/><ellipse cx="7.1" cy="13.0" rx="1.6" ry="2.4" fill="#2f3b2c"/><ellipse cx="45.0" cy="14.2" rx="2.8" ry="2.5" fill="#263024"/><ellipse cx="31.8" cy="7.7" rx="2.6" ry="2.3" fill="#2f3b2c"/><ellipse cx="29.9" cy="10.8" rx="2.2" ry="2.6" fill="#263024"/><ellipse cx="18.6" cy="5.6" rx="2.3" ry="2.0" fill="#2f3b2c"/><ellipse cx="53.7" cy="10.4" rx="2.4" ry="1.7" fill="#1f281e"/><ellipse cx="41.8" cy="3.1" rx="1.9" ry="2.8" fill="#2f3b2c"/><ellipse cx="24.3" cy="10.7" rx="2.3" ry="1.9" fill="#3a4836"/><rect x="-3" y="15" width="63" height="12" fill="#4f6642"/><rect x="-3" y="22" width="63" height="25" fill="#7a9658"/><rect x="-3" y="28" width="63" height="18" fill="#a5bb76"/><ellipse cx="4.4" cy="19.0" rx="2.1" ry="3.0" fill="#3c5434"/><ellipse cx="1.4" cy="16.5" rx="2.1" ry="2.1" fill="#46603a"/><ellipse cx="29.8" cy="29.2" rx="3.0" ry="2.2" fill="#46603a"/><ellipse cx="30.9" cy="26.9" rx="2.4" ry="2.4" fill="#5a7848"/><ellipse cx="47.7" cy="29.3" rx="1.9" ry="1.7" fill="#46603a"/><ellipse cx="2.0" cy="23.4" rx="2.8" ry="2.3" fill="#3c5434"/><ellipse cx="2.8" cy="16.5" rx="2.2" ry="1.9" fill="#6c8a50"/><ellipse cx="41.5" cy="22.9" rx="2.5" ry="2.9" fill="#6c8a50"/><ellipse cx="32.4" cy="24.1" rx="2.8" ry="2.5" fill="#5a7848"/><ellipse cx="16.4" cy="17.1" rx="2.7" ry="2.9" fill="#6c8a50"/><ellipse cx="24.3" cy="17.0" rx="2.4" ry="2.9" fill="#3c5434"/><ellipse cx="9.3" cy="29.9" rx="3.0" ry="1.8" fill="#6c8a50"/><ellipse cx="2.8" cy="20.2" rx="2.2" ry="1.9" fill="#46603a"/><ellipse cx="27.9" cy="23.1" rx="2.4" ry="2.1" fill="#6c8a50"/><ellipse cx="28.0" cy="29.4" rx="3.0" ry="2.6" fill="#5a7848"/><ellipse cx="12.9" cy="21.3" rx="2.8" ry="1.9" fill="#5a7848"/><ellipse cx="34.4" cy="27.5" rx="2.6" ry="1.8" fill="#5a7848"/><ellipse cx="55.2" cy="23.0" rx="1.8" ry="1.6" fill="#5a7848"/><ellipse cx="44.5" cy="20.4" rx="3.1" ry="3.1" fill="#3c5434"/><ellipse cx="22.8" cy="29.7" rx="2.3" ry="3.1" fill="#6c8a50"/><ellipse cx="4.7" cy="26.0" rx="3.2" ry="1.9" fill="#6c8a50"/><ellipse cx="27.5" cy="28.7" rx="2.2" ry="2.9" fill="#46603a"/><ellipse cx="34.6" cy="28.2" rx="3.0" ry="1.7" fill="#5a7848"/><ellipse cx="38.5" cy="26.7" rx="2.2" ry="1.8" fill="#6c8a50"/><ellipse cx="10.9" cy="25.2" rx="1.8" ry="2.6" fill="#46603a"/><ellipse cx="25.7" cy="28.7" rx="1.6" ry="2.9" fill="#6c8a50"/><ellipse cx="32.5" cy="37.1" rx="3.1" ry="2.1" fill="#a6bc78"/><ellipse cx="55.8" cy="41.5" rx="3.3" ry="2.2" fill="#b2c486"/><ellipse cx="25.4" cy="42.1" rx="2.7" ry="2.1" fill="#96b068"/><ellipse cx="29.5" cy="41.4" rx="2.9" ry="3.1" fill="#b2c486"/><ellipse cx="46.5" cy="31.5" rx="2.2" ry="3.0" fill="#a6bc78"/><ellipse cx="6.7" cy="27.9" rx="3.4" ry="2.1" fill="#a6bc78"/><ellipse cx="56.5" cy="28.1" rx="2.3" ry="2.8" fill="#a6bc78"/><ellipse cx="29.2" cy="32.1" rx="2.2" ry="2.8" fill="#b2c486"/><ellipse cx="22.2" cy="38.0" rx="3.2" ry="2.3" fill="#8aa660"/><ellipse cx="3.6" cy="28.5" rx="3.1" ry="1.6" fill="#b2c486"/><ellipse cx="15.7" cy="30.2" rx="1.9" ry="2.8" fill="#b2c486"/><ellipse cx="34.1" cy="39.6" rx="2.7" ry="2.4" fill="#96b068"/><ellipse cx="27.7" cy="27.2" rx="2.3" ry="3.0" fill="#96b068"/><ellipse cx="6.3" cy="41.0" rx="1.6" ry="2.6" fill="#b2c486"/><ellipse cx="41.2" cy="41.0" rx="3.1" ry="3.2" fill="#b2c486"/><ellipse cx="41.6" cy="34.7" rx="2.8" ry="3.2" fill="#96b068"/><ellipse cx="26.4" cy="33.8" rx="2.5" ry="2.1" fill="#b2c486"/><ellipse cx="22.1" cy="39.1" rx="2.2" ry="3.3" fill="#a6bc78"/><ellipse cx="6.0" cy="30.0" rx="2.9" ry="2.7" fill="#96b068"/><ellipse cx="51.7" cy="29.8" rx="2.9" ry="2.2" fill="#b2c486"/><ellipse cx="24.7" cy="40.0" rx="3.3" ry="3.2" fill="#8aa660"/><ellipse cx="48.5" cy="37.0" rx="2.9" ry="2.0" fill="#8aa660"/><polygon points="-3,32 10,31 14,35 12,46 -3,46" fill="#adb6a0"/><rect x="9.5" y="-2" width="2.2" height="20" fill="#727060"/><rect x="3" y="-2" width="1.2" height="16" fill="#55564a"/><rect x="26" y="-2" width="1.3" height="14" fill="#55554a"/><rect x="38" y="-2" width="1.5" height="13" fill="#4a4e42"/><rect x="47" y="-2" width="1.2" height="13" fill="#464a3e"/><path d="M19 15 L21 9 M21 12 L24 8 M20 14 L25 11 M18 14 L17 10" stroke="#a89a78" stroke-width="1.1" fill="none"/><ellipse cx="26.5" cy="19" rx="9" ry="4.1" fill="#a26c40"/><ellipse cx="38" cy="22" rx="3.2" ry="3.2" fill="#c6ab88"/><polygon points="14.5,17 19,15.5 20,21 16,23" fill="#3a2c22"/><rect x="22" y="21" width="1.8" height="7" fill="#3a2a20"/><rect x="31" y="21.5" width="2" height="7" fill="#3e2c20"/><rect x="34.5" y="22" width="1.6" height="5.5" fill="#4a3626"/></g></svg>
<svg class="abs" style="left:473.1px;top:66px;overflow:hidden" width="56.9" height="43" viewBox="0 0 57 43" preserveAspectRatio="none"><defs><filter id="pf5" x="-5%" y="-5%" width="110%" height="110%"><feGaussianBlur stdDeviation="0.6"/></filter></defs><g filter="url(#pf5)"><defs><linearGradient id="sk4" x1="0" y1="0" x2="0.25" y2="1"><stop offset="0" stop-color="#4e6ba2"/><stop offset="0.55" stop-color="#8898c0"/><stop offset="0.9" stop-color="#b3abb6"/><stop offset="1" stop-color="#a09cae"/></linearGradient></defs><rect x="-3" y="-3" width="63" height="29" fill="url(#sk4)"/><rect x="-3" y="19" width="63" height="6" fill="#9a98ae" opacity="0.8"/><rect x="-3" y="23" width="63" height="25" fill="#8797bd"/><rect x="-3" y="32" width="63" height="15" fill="#6a7ca6"/><rect x="-3" y="36" width="30" height="12" fill="#56668c"/><polygon points="-3,21 6,22 14,24 22,27 28,31 24,34 10,33 -3,32" fill="#d9cbb4"/><polygon points="-3,24 5,25 4,30 -3,30" fill="#8a7a68"/><polygon points="36,25 44,24 53,25.5 56,28 46,29.5 38,28.5" fill="#e2e3ea"/><polygon points="33,28 40,28.5 44,30 42,32.5 35,32" fill="#3c4252"/><polygon points="46,29.5 52,29 55,30.5 49,31.5" fill="#50566a"/><path d="M19 18 L25 11.5" stroke="#5a4c30" stroke-width="1.4"/><ellipse cx="25.3" cy="12" rx="2.6" ry="1.5" fill="#9a9aa2" transform="rotate(-30 25.3 12)"/><path d="M15 21 L8 27.5" stroke="#7a3a30" stroke-width="1.3"/><circle cx="13.5" cy="16" r="1.9" fill="#c59a78"/><polygon points="15.5,18 20,17 23.5,23 22.5,27 18.5,27.5 15.5,23" fill="#e2b81e"/><path d="M22.5 24.5 L29 24 L36 28.5" stroke="#1f1f22" stroke-width="2.2" fill="none"/><path d="M21.5 27 L22.3 40" stroke="#1f1f22" stroke-width="2" fill="none"/></g></svg>
<svg class="abs" style="left:540px;top:66px;overflow:hidden" width="56.8" height="43" viewBox="0 0 57 43" preserveAspectRatio="none"><defs><filter id="pf6" x="-5%" y="-5%" width="110%" height="110%"><feGaussianBlur stdDeviation="0.8"/></filter></defs><g filter="url(#pf6)"><rect x="-3" y="-3" width="63" height="49" fill="#34482a"/><ellipse cx="9.4" cy="29.7" rx="2.8" ry="2.5" fill="#2c4022"/><ellipse cx="56.4" cy="20.4" rx="3.4" ry="1.9" fill="#566f3a"/><ellipse cx="13.5" cy="0.1" rx="2.2" ry="2.7" fill="#22331c"/><ellipse cx="8.3" cy="32.3" rx="3.3" ry="2.9" fill="#48622f"/><ellipse cx="56.9" cy="31.8" rx="3.3" ry="2.7" fill="#22331c"/><ellipse cx="54.5" cy="23.2" rx="2.9" ry="2.8" fill="#3b532b"/><ellipse cx="1.3" cy="31.9" rx="1.7" ry="3.1" fill="#22331c"/><ellipse cx="25.8" cy="23.7" rx="2.2" ry="2.5" fill="#2c4022"/><ellipse cx="37.9" cy="20.2" rx="3.1" ry="1.6" fill="#2c4022"/><ellipse cx="11.9" cy="41.7" rx="3.3" ry="3.0" fill="#566f3a"/><ellipse cx="56.4" cy="3.0" rx="2.6" ry="2.6" fill="#48622f"/><ellipse cx="11.5" cy="39.7" rx="3.3" ry="2.3" fill="#3b532b"/><ellipse cx="54.4" cy="21.6" rx="2.1" ry="2.5" fill="#3b532b"/><ellipse cx="1.5" cy="4.0" rx="2.9" ry="3.5" fill="#48622f"/><ellipse cx="0.2" cy="3.0" rx="2.7" ry="2.5" fill="#566f3a"/><ellipse cx="34.7" cy="23.9" rx="2.7" ry="1.9" fill="#2c4022"/><ellipse cx="35.7" cy="35.8" rx="2.2" ry="3.0" fill="#3b532b"/><ellipse cx="14.0" cy="7.3" rx="3.3" ry="1.8" fill="#48622f"/><ellipse cx="21.4" cy="29.4" rx="2.9" ry="3.3" fill="#2c4022"/><ellipse cx="23.2" cy="42.5" rx="3.4" ry="2.7" fill="#3b532b"/><ellipse cx="28.0" cy="16.1" rx="2.0" ry="3.3" fill="#2c4022"/><ellipse cx="32.0" cy="18.9" rx="2.3" ry="3.0" fill="#22331c"/><ellipse cx="47.7" cy="2.2" rx="2.0" ry="2.1" fill="#48622f"/><ellipse cx="14.2" cy="17.0" rx="3.2" ry="2.8" fill="#2c4022"/><ellipse cx="56.1" cy="32.1" rx="2.5" ry="2.0" fill="#26381e"/><ellipse cx="30.0" cy="31.3" rx="1.6" ry="1.9" fill="#3b532b"/><ellipse cx="45.3" cy="37.9" rx="2.7" ry="2.4" fill="#566f3a"/><ellipse cx="51.4" cy="20.5" rx="1.8" ry="2.7" fill="#2c4022"/><ellipse cx="43.8" cy="0.4" rx="2.9" ry="3.4" fill="#22331c"/><ellipse cx="15.1" cy="14.0" rx="2.0" ry="3.4" fill="#48622f"/><ellipse cx="14.7" cy="17.4" rx="3.4" ry="3.3" fill="#2c4022"/><ellipse cx="8.1" cy="17.1" rx="1.9" ry="2.8" fill="#2c4022"/><ellipse cx="4.1" cy="5.1" rx="2.1" ry="2.1" fill="#3b532b"/><ellipse cx="22.6" cy="38.2" rx="2.7" ry="1.9" fill="#48622f"/><ellipse cx="11.5" cy="32.0" rx="3.0" ry="2.7" fill="#566f3a"/><ellipse cx="49.8" cy="33.3" rx="3.1" ry="1.5" fill="#48622f"/><ellipse cx="49.3" cy="17.1" rx="2.6" ry="3.2" fill="#2c4022"/><ellipse cx="14.4" cy="30.0" rx="2.1" ry="1.6" fill="#48622f"/><ellipse cx="8.9" cy="31.2" rx="3.5" ry="3.1" fill="#566f3a"/><ellipse cx="27.9" cy="24.6" rx="2.6" ry="1.6" fill="#566f3a"/><ellipse cx="41.9" cy="41.6" rx="2.1" ry="2.9" fill="#566f3a"/><ellipse cx="43.2" cy="8.2" rx="2.7" ry="2.2" fill="#2c4022"/><ellipse cx="20.2" cy="13.7" rx="3.5" ry="1.7" fill="#22331c"/><ellipse cx="37.1" cy="26.9" rx="3.1" ry="3.5" fill="#566f3a"/><ellipse cx="35.4" cy="0.9" rx="2.8" ry="2.4" fill="#566f3a"/><ellipse cx="29.2" cy="37.7" rx="1.6" ry="1.5" fill="#26381e"/><ellipse cx="24.7" cy="10.6" rx="2.9" ry="3.1" fill="#26381e"/><ellipse cx="24.3" cy="34.3" rx="2.3" ry="2.2" fill="#2c4022"/><ellipse cx="36.0" cy="41.4" rx="1.7" ry="2.5" fill="#48622f"/><ellipse cx="21.3" cy="26.0" rx="1.9" ry="2.4" fill="#26381e"/><ellipse cx="43.2" cy="28.7" rx="3.2" ry="2.9" fill="#26381e"/><ellipse cx="14.9" cy="20.7" rx="2.5" ry="2.1" fill="#48622f"/><ellipse cx="47.0" cy="41.4" rx="3.5" ry="1.5" fill="#3b532b"/><ellipse cx="11.5" cy="37.7" rx="2.9" ry="1.7" fill="#2c4022"/><ellipse cx="4.5" cy="13.0" rx="3.4" ry="3.0" fill="#48622f"/><ellipse cx="56.0" cy="42.6" rx="1.8" ry="2.4" fill="#26381e"/><ellipse cx="19.1" cy="27.6" rx="2.9" ry="2.0" fill="#22331c"/><ellipse cx="18.4" cy="10.9" rx="3.2" ry="1.8" fill="#26381e"/><ellipse cx="28.9" cy="10.3" rx="2.9" ry="2.9" fill="#2c4022"/><ellipse cx="53.6" cy="20.1" rx="2.4" ry="2.7" fill="#3b532b"/><ellipse cx="38.2" cy="28.7" rx="2.7" ry="1.7" fill="#2c4022"/><ellipse cx="2.0" cy="34.8" rx="3.4" ry="2.9" fill="#22331c"/><ellipse cx="4.3" cy="24.9" rx="2.3" ry="2.4" fill="#48622f"/><ellipse cx="13.7" cy="0.3" rx="2.6" ry="1.7" fill="#3b532b"/><ellipse cx="10.8" cy="15.9" rx="1.5" ry="1.8" fill="#566f3a"/><ellipse cx="45.1" cy="35.4" rx="2.6" ry="1.6" fill="#2c4022"/><ellipse cx="23.8" cy="37.9" rx="2.0" ry="2.6" fill="#566f3a"/><ellipse cx="52.7" cy="38.0" rx="1.5" ry="2.7" fill="#22331c"/><ellipse cx="24.8" cy="35.8" rx="3.5" ry="2.8" fill="#2c4022"/><ellipse cx="3.4" cy="35.1" rx="2.7" ry="2.7" fill="#48622f"/><polygon points="22,-3 45,-3 42,1.5 38,4.5 35,6 31,3.5 26,1" fill="#ccdadb"/><polygon points="28,2 33,4.5 35.5,5.5 39.5,2.8 41.5,1.6 39,7 35,9.5 31,8" fill="#8aa0a6"/><polygon points="-3,-3 20,-3 25,3 18,7 -3,8" fill="#6f8066"/><polygon points="2,3.4 12,2.8 13,4.6 3,5.4" fill="#aeae9e"/><ellipse cx="26.8" cy="6.8" rx="2.0" ry="3.6" fill="#2a3c20"/><ellipse cx="19.7" cy="14.6" rx="3.4" ry="3.3" fill="#22331c"/><ellipse cx="6.5" cy="17.5" rx="2.5" ry="3.0" fill="#1f2e19"/><ellipse cx="19.8" cy="5.6" rx="3.4" ry="2.9" fill="#334827"/><ellipse cx="11.8" cy="7.3" rx="2.2" ry="2.8" fill="#22331c"/><ellipse cx="19.6" cy="13.0" rx="2.4" ry="3.5" fill="#334827"/><ellipse cx="25.2" cy="16.3" rx="3.5" ry="2.8" fill="#334827"/><ellipse cx="23.1" cy="13.7" rx="2.3" ry="2.1" fill="#22331c"/><ellipse cx="11.7" cy="8.3" rx="2.5" ry="3.4" fill="#1f2e19"/><ellipse cx="18.5" cy="16.9" rx="2.5" ry="2.6" fill="#22331c"/><ellipse cx="8.3" cy="12.7" rx="2.9" ry="2.7" fill="#1f2e19"/><ellipse cx="2.5" cy="18.0" rx="2.6" ry="2.7" fill="#1f2e19"/><ellipse cx="1.6" cy="15.9" rx="2.3" ry="2.4" fill="#22331c"/><ellipse cx="2.7" cy="16.6" rx="2.3" ry="2.9" fill="#334827"/><ellipse cx="5.0" cy="16.8" rx="3.0" ry="2.7" fill="#22331c"/><ellipse cx="15.0" cy="15.3" rx="3.0" ry="2.3" fill="#22331c"/><polygon points="26,12 34,12 37,20 36,36 27,37 25,22" fill="#46583c"/><ellipse cx="36.1" cy="34.8" rx="2.3" ry="1.3" fill="#36462e"/><ellipse cx="30.1" cy="24.7" rx="1.4" ry="1.4" fill="#62725a"/><ellipse cx="25.2" cy="26.9" rx="2.3" ry="1.3" fill="#62725a"/><ellipse cx="30.1" cy="24.3" rx="2.1" ry="1.6" fill="#43533a"/><ellipse cx="27.5" cy="12.8" rx="1.6" ry="1.4" fill="#55654b"/><ellipse cx="36.6" cy="20.7" rx="2.1" ry="1.6" fill="#36462e"/><ellipse cx="32.9" cy="19.5" rx="1.3" ry="1.8" fill="#62725a"/><ellipse cx="32.1" cy="22.7" rx="2.0" ry="1.4" fill="#55654b"/><ellipse cx="31.4" cy="28.2" rx="1.8" ry="1.9" fill="#43533a"/><ellipse cx="26.2" cy="12.9" rx="1.5" ry="1.9" fill="#36462e"/><polygon points="40,-3 60,-3 60,46 39,46 36,22 38,8" fill="#2b4122"/><ellipse cx="52.5" cy="36.1" rx="1.9" ry="3.4" fill="#2f4a24"/><ellipse cx="42.2" cy="29.3" rx="2.9" ry="3.4" fill="#3d5a2c"/><ellipse cx="52.8" cy="32.9" rx="2.4" ry="3.2" fill="#223619"/><ellipse cx="39.5" cy="7.3" rx="2.5" ry="3.1" fill="#3d5a2c"/><ellipse cx="48.5" cy="42.8" rx="2.8" ry="2.1" fill="#4f6c34"/><ellipse cx="42.0" cy="14.1" rx="2.1" ry="2.6" fill="#3d5a2c"/><ellipse cx="51.6" cy="1.4" rx="2.0" ry="2.2" fill="#223619"/><ellipse cx="44.9" cy="10.6" rx="2.7" ry="1.9" fill="#1d2e16"/><ellipse cx="55.3" cy="11.5" rx="2.9" ry="3.3" fill="#223619"/><ellipse cx="50.0" cy="33.7" rx="2.8" ry="2.2" fill="#2f4a24"/><ellipse cx="51.7" cy="41.9" rx="1.8" ry="2.5" fill="#4f6c34"/><ellipse cx="53.5" cy="22.9" rx="2.0" ry="2.7" fill="#3d5a2c"/><ellipse cx="45.0" cy="23.3" rx="2.0" ry="2.0" fill="#3d5a2c"/><ellipse cx="46.7" cy="20.2" rx="3.1" ry="2.1" fill="#2f4a24"/><ellipse cx="53.1" cy="35.5" rx="2.2" ry="3.2" fill="#3d5a2c"/><ellipse cx="39.6" cy="37.5" rx="2.9" ry="2.4" fill="#223619"/><ellipse cx="39.7" cy="42.5" rx="2.9" ry="3.1" fill="#4f6c34"/><ellipse cx="48.4" cy="22.5" rx="3.1" ry="3.1" fill="#3d5a2c"/><ellipse cx="44.8" cy="12.6" rx="2.2" ry="3.2" fill="#4f6c34"/><ellipse cx="51.2" cy="0.7" rx="2.1" ry="2.6" fill="#1d2e16"/><ellipse cx="46.6" cy="16.9" rx="2.1" ry="2.4" fill="#3d5a2c"/><ellipse cx="45.1" cy="31.0" rx="2.3" ry="1.6" fill="#1d2e16"/><ellipse cx="54.1" cy="7.2" rx="2.0" ry="1.8" fill="#4f6c34"/><ellipse cx="43.0" cy="19.2" rx="1.9" ry="1.7" fill="#223619"/><ellipse cx="40.0" cy="40.2" rx="2.6" ry="2.9" fill="#223619"/><ellipse cx="42.5" cy="14.3" rx="2.2" ry="3.2" fill="#223619"/><ellipse cx="41.7" cy="21.7" rx="1.7" ry="3.0" fill="#1d2e16"/><ellipse cx="48.9" cy="13.2" rx="2.8" ry="3.3" fill="#1d2e16"/><ellipse cx="49" cy="8" rx="6" ry="3" fill="#5c7238"/><polygon points="-3,21 7,22 12,34 14,46 -3,46" fill="#517a3b"/><ellipse cx="4.1" cy="40.7" rx="2.4" ry="1.7" fill="#456c32"/><ellipse cx="7.0" cy="24.8" rx="2.5" ry="1.7" fill="#456c32"/><ellipse cx="6.2" cy="25.7" rx="2.4" ry="2.1" fill="#6b9650"/><ellipse cx="9.2" cy="33.2" rx="2.4" ry="2.1" fill="#5d8a44"/><ellipse cx="6.0" cy="33.2" rx="2.0" ry="2.5" fill="#6b9650"/><ellipse cx="7.5" cy="34.8" rx="1.8" ry="1.8" fill="#6b9650"/><ellipse cx="1.8" cy="32.3" rx="1.5" ry="2.1" fill="#6b9650"/><ellipse cx="7.0" cy="37.1" rx="2.6" ry="2.1" fill="#5d8a44"/><ellipse cx="9.0" cy="28.0" rx="1.9" ry="2.1" fill="#456c32"/><ellipse cx="8.9" cy="35.0" rx="2.2" ry="1.9" fill="#456c32"/><polygon points="6.5,19.5 23.5,19.5 24.5,28 25.5,37.5 15,37.5 11,28" fill="#eaf1f1"/><path d="M11 21 L15 36 M15.5 21 L18.5 36 M20 21 L22.5 36" stroke="#c3d2d2" stroke-width="0.8" fill="none"/><polygon points="13,37 27,37 31,46 12,46" fill="#7d987a"/><ellipse cx="35.5" cy="32" rx="1.6" ry="1" fill="#e4ebe6"/></g></svg>
<svg class="abs" style="left:606.1px;top:70px;overflow:hidden" width="57.5" height="34.5" viewBox="0 0 57.5 34.5" preserveAspectRatio="none"><defs><filter id="pf7" x="-5%" y="-5%" width="110%" height="110%"><feGaussianBlur stdDeviation="0.9"/></filter></defs><g filter="url(#pf7)"><defs><linearGradient id="dg6" x1="0" y1="0" x2="0" y2="1"><stop offset="0" stop-color="#5b953a"/><stop offset="0.5" stop-color="#4a8230"/><stop offset="1" stop-color="#2c5a20"/></linearGradient></defs><rect x="-3" y="-3" width="64" height="42" fill="url(#dg6)"/><polygon points="-3,1 61,1 61,8.5 50,9.5 42,8 33,8.5 24,10.5 12,10 -3,12" fill="#b5ca78"/><polygon points="-3,6 20,7 30,8.5 22,10.6 10,10.4 -3,12.5" fill="#a5c266"/><ellipse cx="10" cy="17" rx="9" ry="2.2" fill="#78a648" opacity="0.7"/><ellipse cx="44" cy="15" rx="8" ry="1.8" fill="#72a044" opacity="0.7"/><ellipse cx="47" cy="22" rx="9" ry="2" fill="#5f9440" opacity="0.6"/><rect x="-3" y="-3" width="64" height="5" fill="#2c3322"/><ellipse cx="4" cy="2.2" rx="4.5" ry="2.6" fill="#1c2016"/><ellipse cx="30" cy="1.6" rx="10" ry="1.2" fill="#4a5a30"/><polygon points="12,29.5 26,27.5 33,29 20,31.5" fill="#1f4017"/><polygon points="23,16 31,19 30.5,25.5 16,32.5 6,36 -3,36 -3,25 10,21.5" fill="#cdc5aa"/><polygon points="25,22.3 41,22.8 43,25 34,27 26,27.5" fill="#dad9cb"/><ellipse cx="27.5" cy="14.3" rx="4.6" ry="5" fill="#cfc09a"/><ellipse cx="24.4" cy="15.5" rx="1.6" ry="3.2" fill="#b9a67c"/><ellipse cx="30.8" cy="15.8" rx="1.3" ry="1.9" fill="#3a3026"/><ellipse cx="4" cy="31" rx="7" ry="3.6" fill="#bdb8ac"/></g></svg>
<svg class="abs" style="left:672.8px;top:70.6px;overflow:hidden" width="57.3" height="37.4" viewBox="0 0 57.3 37.4" preserveAspectRatio="none"><defs><filter id="pf8" x="-5%" y="-5%" width="110%" height="110%"><feGaussianBlur stdDeviation="0.6"/></filter></defs><g filter="url(#pf8)"><defs><linearGradient id="wt7" x1="0" y1="0" x2="0" y2="1"><stop offset="0" stop-color="#5a96b2"/><stop offset="0.5" stop-color="#7ab4c8"/><stop offset="0.85" stop-color="#a6ccd4"/><stop offset="1" stop-color="#b8d0d2"/></linearGradient></defs><rect x="-3" y="-3" width="64" height="12" fill="#dbe9f1"/><rect x="-3" y="5.6" width="64" height="26" fill="url(#wt7)"/><polygon points="-3,6 14,6.5 12,14 -3,15" fill="#3b6f8c" opacity="0.8"/><polygon points="-3,-3 3,0 9,1.8 20,4.8 27,6 14,7 -3,8.2" fill="#1f3029"/><polygon points="61,-3 55,0.5 49,3 41,5.8 50,6.6 61,7.4" fill="#2c4a3a"/><polygon points="-3,27.5 20,28.5 40,30.5 61,33 61,41 -3,41" fill="#c2b3aa"/><polygon points="-3,31 61,35.5 61,41 -3,41" fill="#b3a69e"/><polygon points="26.5,24 28,22.6 30,24 31,30.5 29.5,32.5 26.5,31.5" fill="#b5704f"/><circle cx="29" cy="21.8" r="1.5" fill="#3c2a22"/><ellipse cx="35" cy="30.8" rx="2.4" ry="2" fill="#c9625f"/><ellipse cx="31.5" cy="31.8" rx="2.2" ry="1.2" fill="#b33c3a"/></g></svg>
<span class="t" id="t27" style="left:684px;top:112.8px;font-size:8px;">SC_2003.JPG</span>
<svg class="abs" style="left:683.5px;top:160px;overflow:hidden" width="46.5" height="41.6" viewBox="0 0 46.5 41.6" preserveAspectRatio="none"><defs><filter id="pf9" x="-5%" y="-5%" width="110%" height="110%"><feGaussianBlur stdDeviation="0.8"/></filter></defs><g filter="url(#pf9)"><rect x="-3" y="-3" width="60" height="50" fill="#6f7d45"/><ellipse cx="17.9" cy="9.7" rx="1.7" ry="3.0" fill="#6a7842"/><ellipse cx="42.1" cy="11.9" rx="1.9" ry="2.9" fill="#4c5a2c"/><ellipse cx="27.1" cy="32.8" rx="2.6" ry="2.9" fill="#566432"/><ellipse cx="44.6" cy="41.4" rx="3.2" ry="2.0" fill="#84905a"/><ellipse cx="30.8" cy="26.1" rx="1.5" ry="2.8" fill="#5f6e3a"/><ellipse cx="20.3" cy="11.8" rx="2.7" ry="1.5" fill="#84905a"/><ellipse cx="34.4" cy="5.3" rx="2.6" ry="1.6" fill="#76844c"/><ellipse cx="32.4" cy="41.2" rx="1.5" ry="2.0" fill="#6a7842"/><ellipse cx="1.2" cy="24.3" rx="2.2" ry="2.8" fill="#5f6e3a"/><ellipse cx="14.2" cy="6.1" rx="2.6" ry="2.1" fill="#8c9862"/><ellipse cx="30.9" cy="36.1" rx="1.8" ry="1.6" fill="#5f6e3a"/><ellipse cx="21.5" cy="30.6" rx="2.2" ry="2.7" fill="#6a7842"/><ellipse cx="1.3" cy="0.6" rx="2.2" ry="1.7" fill="#4c5a2c"/><ellipse cx="3.1" cy="1.7" rx="3.0" ry="3.0" fill="#4c5a2c"/><ellipse cx="39.4" cy="41.4" rx="2.7" ry="3.0" fill="#566432"/><ellipse cx="30.8" cy="31.5" rx="2.5" ry="2.2" fill="#4c5a2c"/><ellipse cx="4.7" cy="39.7" rx="1.8" ry="2.1" fill="#566432"/><ellipse cx="32.0" cy="17.2" rx="2.2" ry="3.1" fill="#84905a"/><ellipse cx="25.5" cy="39.0" rx="1.8" ry="2.1" fill="#8c9862"/><ellipse cx="15.3" cy="38.8" rx="2.1" ry="3.0" fill="#4c5a2c"/><ellipse cx="20.7" cy="3.4" rx="2.4" ry="1.8" fill="#76844c"/><ellipse cx="8.5" cy="28.0" rx="1.5" ry="1.8" fill="#6a7842"/><ellipse cx="29.3" cy="20.7" rx="1.6" ry="2.1" fill="#8c9862"/><ellipse cx="5.6" cy="41.9" rx="2.5" ry="2.7" fill="#6a7842"/><ellipse cx="36.4" cy="16.5" rx="2.0" ry="1.9" fill="#84905a"/><ellipse cx="1.4" cy="24.8" rx="3.1" ry="2.5" fill="#6a7842"/><ellipse cx="24.4" cy="38.6" rx="2.1" ry="3.2" fill="#5f6e3a"/><ellipse cx="2.0" cy="28.0" rx="2.6" ry="1.8" fill="#566432"/><ellipse cx="43.3" cy="38.1" rx="2.0" ry="1.7" fill="#4c5a2c"/><ellipse cx="17.8" cy="9.7" rx="1.6" ry="2.7" fill="#6a7842"/><ellipse cx="27.6" cy="12.7" rx="2.8" ry="2.6" fill="#76844c"/><ellipse cx="4.6" cy="19.7" rx="2.2" ry="2.3" fill="#566432"/><ellipse cx="13.7" cy="10.4" rx="2.2" ry="2.4" fill="#566432"/><ellipse cx="2.6" cy="34.7" rx="2.7" ry="2.7" fill="#5f6e3a"/><ellipse cx="35.6" cy="26.5" rx="2.1" ry="2.3" fill="#84905a"/><ellipse cx="27.2" cy="18.0" rx="1.4" ry="1.7" fill="#6a7842"/><ellipse cx="24.1" cy="6.2" rx="2.6" ry="2.4" fill="#5f6e3a"/><ellipse cx="11.0" cy="35.7" rx="2.5" ry="2.4" fill="#6a7842"/><ellipse cx="34.2" cy="16.2" rx="1.7" ry="2.3" fill="#6a7842"/><ellipse cx="24.0" cy="7.7" rx="1.5" ry="2.4" fill="#5f6e3a"/><ellipse cx="8.9" cy="7.6" rx="2.3" ry="2.8" fill="#4c5a2c"/><ellipse cx="44.0" cy="36.0" rx="1.4" ry="2.0" fill="#84905a"/><ellipse cx="18.3" cy="2.8" rx="2.9" ry="3.2" fill="#8c9862"/><ellipse cx="20.6" cy="30.1" rx="2.3" ry="1.7" fill="#5f6e3a"/><ellipse cx="17.4" cy="14.7" rx="3.0" ry="1.7" fill="#76844c"/><ellipse cx="43.0" cy="2.7" rx="1.4" ry="2.0" fill="#84905a"/><ellipse cx="15.2" cy="0.7" rx="1.5" ry="2.2" fill="#4c5a2c"/><ellipse cx="41.3" cy="29.1" rx="3.0" ry="3.0" fill="#8c9862"/><ellipse cx="12.9" cy="35.7" rx="2.8" ry="2.0" fill="#76844c"/><ellipse cx="35.4" cy="36.7" rx="2.8" ry="2.8" fill="#566432"/><ellipse cx="22.7" cy="10.6" rx="2.6" ry="2.4" fill="#84905a"/><ellipse cx="26.9" cy="6.8" rx="3.1" ry="2.8" fill="#5f6e3a"/><ellipse cx="35.4" cy="21.9" rx="1.7" ry="2.6" fill="#84905a"/><ellipse cx="13.3" cy="38.9" rx="1.9" ry="1.9" fill="#5f6e3a"/><ellipse cx="39.7" cy="41.8" rx="1.9" ry="2.1" fill="#6a7842"/><ellipse cx="25.7" cy="30.2" rx="2.1" ry="3.1" fill="#84905a"/><ellipse cx="43.7" cy="17.4" rx="3.1" ry="2.2" fill="#8c9862"/><ellipse cx="10.4" cy="34.7" rx="1.5" ry="2.5" fill="#5f6e3a"/><ellipse cx="8.1" cy="17.7" rx="1.6" ry="2.4" fill="#566432"/><ellipse cx="40.3" cy="26.1" rx="3.2" ry="2.7" fill="#8c9862"/><ellipse cx="19.0" cy="27.6" rx="2.4" ry="2.7" fill="#4c5a2c"/><ellipse cx="37.8" cy="28.9" rx="2.9" ry="3.1" fill="#4c5a2c"/><ellipse cx="36.2" cy="0.7" rx="3.1" ry="2.4" fill="#566432"/><ellipse cx="45.6" cy="16.3" rx="3.0" ry="1.7" fill="#4c5a2c"/><ellipse cx="29.0" cy="3.6" rx="3.1" ry="3.0" fill="#4c5a2c"/><ellipse cx="44.2" cy="17.0" rx="2.0" ry="1.8" fill="#8c9862"/><ellipse cx="44.9" cy="38.6" rx="3.0" ry="2.3" fill="#6a7842"/><ellipse cx="7.5" cy="29.1" rx="1.8" ry="3.1" fill="#8c9862"/><ellipse cx="12.7" cy="11.3" rx="2.3" ry="1.6" fill="#6a7842"/><ellipse cx="10.5" cy="1.1" rx="2.6" ry="1.6" fill="#84905a"/><ellipse cx="44.0" cy="13.7" rx="1.8" ry="3.0" fill="#76844c"/><ellipse cx="46.3" cy="6.2" rx="2.0" ry="1.4" fill="#566432"/><ellipse cx="3.8" cy="3.1" rx="2.7" ry="1.6" fill="#84905a"/><ellipse cx="30.4" cy="3.8" rx="3.2" ry="2.1" fill="#5f6e3a"/><ellipse cx="6.9" cy="12.6" rx="3.1" ry="2.7" fill="#76844c"/><ellipse cx="33.7" cy="10.2" rx="1.8" ry="2.3" fill="#84905a"/><ellipse cx="3.9" cy="21.4" rx="2.1" ry="2.0" fill="#566432"/><ellipse cx="42.8" cy="32.9" rx="2.5" ry="1.9" fill="#5f6e3a"/><ellipse cx="1.1" cy="6.4" rx="2.2" ry="2.2" fill="#76844c"/><ellipse cx="44.5" cy="34.3" rx="3.1" ry="1.8" fill="#84905a"/><ellipse cx="3.9" cy="22.7" rx="1.9" ry="2.9" fill="#84905a"/><ellipse cx="10.0" cy="0.2" rx="2.5" ry="2.5" fill="#566432"/><ellipse cx="35.2" cy="28.1" rx="2.5" ry="3.1" fill="#6a7842"/><ellipse cx="32.9" cy="19.6" rx="2.7" ry="2.5" fill="#76844c"/><ellipse cx="19.1" cy="5.5" rx="3.1" ry="1.4" fill="#566432"/><ellipse cx="27.9" cy="8.2" rx="3.1" ry="2.0" fill="#4c5a2c"/><ellipse cx="18.7" cy="29.9" rx="3.0" ry="1.9" fill="#566432"/><ellipse cx="1.6" cy="31.6" rx="2.7" ry="1.8" fill="#84905a"/><ellipse cx="8.7" cy="28.6" rx="2.5" ry="1.5" fill="#84905a"/><ellipse cx="27.0" cy="40.0" rx="2.7" ry="3.0" fill="#5f6e3a"/><ellipse cx="22.9" cy="34.1" rx="1.7" ry="1.2" fill="#dfe2c6"/><ellipse cx="31.3" cy="19.5" rx="1.4" ry="0.9" fill="#dfe2c6"/><ellipse cx="2.5" cy="27.1" rx="1.6" ry="1.0" fill="#dfe2c6"/><ellipse cx="14.1" cy="37.3" rx="1.8" ry="1.2" fill="#dfe2c6"/><ellipse cx="32.4" cy="32.8" rx="1.7" ry="1.1" fill="#dfe2c6"/><ellipse cx="26.6" cy="34.2" rx="1.7" ry="1.2" fill="#dfe2c6"/><ellipse cx="8.4" cy="28.8" rx="1.6" ry="1.1" fill="#dfe2c6"/><ellipse cx="9.1" cy="39.2" rx="1.9" ry="1.2" fill="#dfe2c6"/><ellipse cx="4.6" cy="37.5" rx="1.8" ry="1.2" fill="#dfe2c6"/><ellipse cx="5.3" cy="34.7" rx="1.8" ry="1.2" fill="#dfe2c6"/><ellipse cx="16.8" cy="27.9" rx="1.6" ry="1.0" fill="#dfe2c6"/><ellipse cx="39.1" cy="13.9" rx="1.2" ry="0.8" fill="#dfe2c6"/><ellipse cx="4.7" cy="39.4" rx="1.9" ry="1.3" fill="#dfe2c6"/><ellipse cx="24.4" cy="17.4" rx="1.3" ry="0.9" fill="#dfe2c6"/><ellipse cx="45.4" cy="40.0" rx="1.9" ry="1.3" fill="#dfe2c6"/><ellipse cx="7.0" cy="28.4" rx="1.6" ry="1.1" fill="#dfe2c6"/><ellipse cx="7.9" cy="25.3" rx="1.5" ry="1.0" fill="#dfe2c6"/><ellipse cx="29.3" cy="20.3" rx="1.4" ry="0.9" fill="#dfe2c6"/><ellipse cx="32.7" cy="15.6" rx="1.2" ry="0.8" fill="#dfe2c6"/><ellipse cx="9.5" cy="37.4" rx="1.8" ry="1.2" fill="#dfe2c6"/><ellipse cx="19.6" cy="28.3" rx="1.6" ry="1.1" fill="#dfe2c6"/><ellipse cx="28.2" cy="29.8" rx="1.6" ry="1.1" fill="#dfe2c6"/><ellipse cx="18.9" cy="14.5" rx="1.2" ry="0.8" fill="#dfe2c6"/><ellipse cx="34.0" cy="40.4" rx="1.9" ry="1.3" fill="#dfe2c6"/><ellipse cx="45.0" cy="34.2" rx="1.7" ry="1.2" fill="#dfe2c6"/><ellipse cx="17.7" cy="26.7" rx="1.5" ry="1.0" fill="#dfe2c6"/><ellipse cx="32.4" cy="34.4" rx="1.7" ry="1.2" fill="#dfe2c6"/><ellipse cx="7.0" cy="22.8" rx="1.4" ry="1.0" fill="#dfe2c6"/><ellipse cx="18.0" cy="30.7" rx="1.6" ry="1.1" fill="#dfe2c6"/><ellipse cx="37.6" cy="30.4" rx="1.6" ry="1.1" fill="#dfe2c6"/><ellipse cx="1.8" cy="39.6" rx="1.7" ry="2.2" fill="#4a582a"/><ellipse cx="21.3" cy="38.0" rx="1.5" ry="2.1" fill="#56642f"/><ellipse cx="29.4" cy="41.6" rx="2.8" ry="2.9" fill="#56642f"/><ellipse cx="8.3" cy="40.8" rx="2.7" ry="2.1" fill="#4a582a"/><ellipse cx="7.5" cy="40.7" rx="1.7" ry="2.1" fill="#56642f"/><ellipse cx="27.0" cy="37.0" rx="1.6" ry="1.6" fill="#4a582a"/><ellipse cx="39.4" cy="36.4" rx="2.8" ry="2.3" fill="#4a582a"/><ellipse cx="46.4" cy="40.5" rx="2.5" ry="2.5" fill="#4a582a"/><ellipse cx="4.4" cy="39.0" rx="2.7" ry="2.8" fill="#56642f"/><ellipse cx="15.5" cy="39.3" rx="2.2" ry="1.7" fill="#4a582a"/><ellipse cx="36.7" cy="34.4" rx="2.4" ry="2.1" fill="#4a582a"/><ellipse cx="31.6" cy="34.6" rx="3.0" ry="2.5" fill="#56642f"/><ellipse cx="23.3" cy="40.2" rx="2.9" ry="2.6" fill="#4a582a"/><ellipse cx="22.2" cy="37.3" rx="2.7" ry="2.0" fill="#4a582a"/></g></svg>
<span class="t" id="t28" style="left:684px;top:206.2px;font-size:8px;">SCN1764.JPG</span>
<svg class="abs" style="left:683.5px;top:253.5px;overflow:hidden" width="46.5" height="42" viewBox="0 0 46.5 42" preserveAspectRatio="none"><defs><filter id="pf10" x="-5%" y="-5%" width="110%" height="110%"><feGaussianBlur stdDeviation="0.6"/></filter></defs><g filter="url(#pf10)"><defs><linearGradient id="sk9" x1="0" y1="0" x2="0" y2="1"><stop offset="0" stop-color="#5790d0"/><stop offset="0.7" stop-color="#9cc2e6"/><stop offset="1" stop-color="#b8d6ee"/></linearGradient></defs><rect x="-3" y="-3" width="56" height="30" fill="url(#sk9)"/><ellipse cx="2" cy="14" rx="7" ry="3.4" fill="#e4eef8" opacity="0.75"/><ellipse cx="34" cy="16" rx="6" ry="2.4" fill="#d6e6f4" opacity="0.6"/><polygon points="-3,20 4,18.2 12,18.6 20,18.2 28,19.6 34,22 34,36 -3,36" fill="#6f8aa0"/><polygon points="-3,24 10,23 22,24 30,27 -3,33" fill="#58756c"/><polygon points="-3,27 8,26.5 14,29 20,26 25,23 30,18.5 34,14.5 37.5,9 39.5,6.5 41.5,10.5 46,11.5 50,13 50,46 -3,46" fill="#2c4a27"/><polygon points="20,34 28,27 36,20 42,14 50,16 50,46 18,46" fill="#3a662c"/><clipPath id="mc9"><polygon points="-3,27 8,26.5 14,29 20,26 25,23 30,18.5 34,14.5 37.5,9 39.5,6.5 41.5,10.5 46,11.5 50,13 50,46 -3,46"/></clipPath><g clip-path="url(#mc9)"><ellipse cx="26.6" cy="29.1" rx="1.7" ry="2.7" fill="#38622b"/><ellipse cx="42.5" cy="22.7" rx="2.8" ry="2.3" fill="#23401e"/><ellipse cx="39.7" cy="30.3" rx="2.4" ry="2.3" fill="#2f5626"/><ellipse cx="30.4" cy="23.2" rx="2.5" ry="1.4" fill="#2a4c24"/><ellipse cx="20.8" cy="22.7" rx="2.2" ry="2.7" fill="#38622b"/><ellipse cx="29.4" cy="23.8" rx="2.1" ry="2.7" fill="#38622b"/><ellipse cx="40.6" cy="16.8" rx="2.9" ry="1.7" fill="#2a4c24"/><ellipse cx="44.5" cy="41.6" rx="2.7" ry="2.7" fill="#40692f"/><ellipse cx="22.9" cy="30.3" rx="2.9" ry="2.9" fill="#23401e"/><ellipse cx="45.2" cy="39.7" rx="3.0" ry="2.0" fill="#23401e"/><ellipse cx="44.4" cy="30.3" rx="1.7" ry="2.0" fill="#23401e"/><ellipse cx="33.4" cy="29.5" rx="2.1" ry="1.4" fill="#23401e"/><ellipse cx="42.4" cy="36.4" rx="3.0" ry="2.9" fill="#40692f"/><ellipse cx="22.7" cy="37.0" rx="1.9" ry="2.3" fill="#23401e"/><ellipse cx="42.7" cy="16.7" rx="2.1" ry="1.5" fill="#40692f"/><ellipse cx="43.3" cy="26.6" rx="2.8" ry="1.8" fill="#23401e"/><ellipse cx="35.8" cy="21.5" rx="3.0" ry="1.5" fill="#23401e"/><ellipse cx="28.3" cy="33.3" rx="2.1" ry="1.7" fill="#2f5626"/><ellipse cx="43.9" cy="23.7" rx="2.2" ry="1.6" fill="#23401e"/><ellipse cx="43.9" cy="20.6" rx="1.9" ry="2.8" fill="#2a4c24"/><ellipse cx="38.1" cy="20.1" rx="2.1" ry="1.5" fill="#40692f"/><ellipse cx="33.5" cy="40.9" rx="1.9" ry="2.5" fill="#23401e"/><ellipse cx="39.7" cy="28.4" rx="1.4" ry="2.6" fill="#2f5626"/><ellipse cx="23.8" cy="33.8" rx="3.0" ry="2.0" fill="#23401e"/><ellipse cx="28.6" cy="26.4" rx="3.0" ry="3.0" fill="#2f5626"/><ellipse cx="34.9" cy="26.6" rx="2.6" ry="1.9" fill="#40692f"/><ellipse cx="21.5" cy="27.8" rx="2.6" ry="2.2" fill="#1a2e1a"/><ellipse cx="9.0" cy="40.8" rx="1.7" ry="3.0" fill="#2f4c2a"/><ellipse cx="18.3" cy="41.5" rx="2.1" ry="1.4" fill="#2f4c2a"/><ellipse cx="9.6" cy="30.6" rx="1.7" ry="2.2" fill="#1a2e1a"/><ellipse cx="10.7" cy="34.5" rx="1.6" ry="1.5" fill="#2f4c2a"/><ellipse cx="20.8" cy="35.6" rx="2.5" ry="2.8" fill="#274224"/><ellipse cx="3.1" cy="34.8" rx="2.2" ry="1.7" fill="#1f361e"/><ellipse cx="7.1" cy="38.8" rx="2.1" ry="2.3" fill="#2f4c2a"/><ellipse cx="13.2" cy="30.0" rx="1.7" ry="2.6" fill="#2f4c2a"/><ellipse cx="10.0" cy="29.6" rx="1.6" ry="1.7" fill="#274224"/><ellipse cx="13.9" cy="30.3" rx="1.7" ry="2.3" fill="#1f361e"/><ellipse cx="12.1" cy="38.2" rx="2.6" ry="1.6" fill="#274224"/><ellipse cx="18.0" cy="33.8" rx="2.9" ry="2.7" fill="#274224"/><ellipse cx="11.6" cy="39.4" rx="2.5" ry="2.9" fill="#2f4c2a"/><ellipse cx="11.6" cy="37.1" rx="1.5" ry="2.5" fill="#274224"/><ellipse cx="0.9" cy="36.3" rx="1.4" ry="1.8" fill="#2f4c2a"/><ellipse cx="1.0" cy="34.8" rx="1.6" ry="2.6" fill="#2f4c2a"/><ellipse cx="11.0" cy="37.1" rx="1.6" ry="2.1" fill="#1f361e"/></g></g></svg>
<span class="t" id="t29" style="left:684px;top:300px;font-size:8px;">SCN2016.JPG</span>
<div class="in combo" style="left:560px;top:326px;width:161.5px;height:13.5px;"></div>
<svg class="abs" style="left:711.5px;top:331.05px" width="6" height="4" viewBox="0 0 6 4"><path d="M0.5 0.5 L3 3 L5.5 0.5" fill="none" stroke="#333" stroke-width="1.1"/></svg>
<div class="in combo dis" style="left:560px;top:344px;width:161.5px;height:12.5px;"></div>
<svg class="abs" style="left:711.5px;top:348.55px" width="6" height="4" viewBox="0 0 6 4"><path d="M0.5 0.5 L3 3 L5.5 0.5" fill="none" stroke="#333" stroke-width="1.1"/></svg>
<div class="" style="left:204.5px;top:404.5px;width:584px;height:144.5px;background:#fff;border:1px solid #b8b8b8"></div>
<div class="" style="left:187px;top:104.5px;width:496.6px;height:336.3px;background:#a9d184;box-shadow:0 0 1.5px rgba(0,0,0,.18)"></div>
<div class="" style="left:192.5px;top:124px;width:485.8px;height:309.7px;background:#f0f0f0"></div>
<span class="t" id="t30" style="left:398px;top:109.8px;color:#37472c;font-size:9.6px;-webkit-text-stroke:0.12px;">Set for all images:</span>
<div class="" style="left:660px;top:105px;width:18.7px;height:12.5px;background:#d0463f"></div>
<svg class="abs" style="left:666.8px;top:108.7px" width="5" height="5" viewBox="0 0 5 5"><path d="M0.3 0.3L4.7 4.7M4.7 0.3L0.3 4.7" stroke="#fff" stroke-width="1"/></svg>
<div class="gb" style="left:196px;top:133px;width:157px;height:70px;"></div>
<div class="" style="left:200px;top:128px;width:34px;height:10px;background:#f0f0f0"></div>
<div class="cb" style="left:201.7px;top:128.9px"></div>
<span class="t" id="t31" style="left:212px;top:128px;">CROP:</span>
<span class="t" id="t32" style="left:203px;top:140.5px;">X-pos:</span>
<div class="in dis" style="left:228.3px;top:139px;width:25.5px;height:13px;"></div>
<span class="t" id="t33" style="left:230.5px;top:140.2px;color:#8c8c8c;font-size:8.3px;">1</span>
<span class="t" id="t34" style="left:263.8px;top:140.5px;">Y-pos:</span>
<div class="in dis" style="left:287px;top:139px;width:26.4px;height:13px;"></div>
<span class="t" id="t35" style="left:289.2px;top:140.2px;color:#8c8c8c;font-size:8.3px;">1</span>
<span class="t" id="t36" style="left:317px;top:143.3px;">(can be</span>
<span class="t" id="t37" style="left:317px;top:151.6px;">negative)</span>
<span class="t" id="t38" style="left:203px;top:154.5px;">Width:</span>
<div class="in dis" style="left:228.3px;top:153px;width:25.5px;height:12.5px;"></div>
<span class="t" id="t39" style="left:230.5px;top:153.95px;color:#8c8c8c;font-size:8.3px;">2480</span>
<span class="t" id="t40" style="left:263.8px;top:154.5px;">Height:</span>
<div class="in dis" style="left:287px;top:153px;width:26.4px;height:12.5px;"></div>
<span class="t" id="t41" style="left:289.2px;top:153.95px;color:#8c8c8c;font-size:8.3px;">1753</span>
<span class="t" id="t42" style="left:203px;top:171.4px;">Start</span>
<span class="t" id="t43" style="left:203px;top:179.2px;">corner:</span>
<div class="rb dis" style="left:229px;top:168.8px"><i style="background:#8a8a8a"></i></div>
<span class="t" id="t44" style="left:239px;top:167.8px;color:#8c8c8c;">Left top</span>
<div class="rb dis" style="left:287.4px;top:168.8px"></div>
<span class="t" id="t45" style="left:298px;top:167.8px;color:#8c8c8c;">Right top</span>
<div class="rb dis" style="left:256.4px;top:179.8px"></div>
<span class="t" id="t46" style="left:266px;top:178.8px;color:#8c8c8c;">Center</span>
<div class="btn dis" style="left:293.6px;top:179px;width:57px;height:11px;"></div>
<span class="t bt dist" id="t47" style="left:293.6px;top:179.5px;width:57px;">Get current sel.</span>
<div class="rb dis" style="left:229px;top:192px"></div>
<span class="t" id="t48" style="left:239px;top:191px;color:#8c8c8c;">Left bottom</span>
<div class="rb dis" style="left:287.4px;top:192px"></div>
<span class="t" id="t49" style="left:298px;top:191px;color:#8c8c8c;">Right bottom</span>
<div class="gb" style="left:196px;top:211px;width:157px;height:127px;"></div>
<div class="gb" style="left:196px;top:338px;width:157px;height:94px;"></div>
<div class="" style="left:327px;top:315px;width:26px;height:1px;background:#e3e3e3"></div>
<div class="" style="left:200px;top:206px;width:40px;height:10px;background:#f0f0f0"></div>
<div class="cb" style="left:201.7px;top:206.5px"><svg width="8.2" height="8.2" viewBox="0 0 8 8" style="position:absolute;left:-1px;top:-1px"><path d="M1.6 4.1 L3.3 5.9 L6.5 1.8" fill="none" stroke="#111" stroke-width="1.5"/></svg></div>
<span class="t" id="t50" style="left:212px;top:205.6px;">RESIZE:</span>
<div class="rb" style="left:202.3px;top:219px"><i style="background:#111"></i></div>
<span class="t" id="t51" style="left:212px;top:218px;">Set new size:</span>
<div class="rb" style="left:213px;top:230px"><i style="background:#111"></i></div>
<span class="t" id="t52" style="left:222.3px;top:229px;">Set one or both sides to:</span>
<span class="t" id="t53" style="left:228.7px;top:239.3px;">Width:</span>
<span class="t" id="t54" style="left:286.8px;top:239.3px;">Height:</span>
<div class="in" style="left:228.3px;top:249.6px;width:26.2px;height:11.9px;"></div>
<div class="in" style="left:286.4px;top:249.6px;width:26.6px;height:11.9px;"></div>
<span class="t" id="t55" style="left:288.6px;top:250.25px;font-size:8.3px;">550</span>
<div class="rb" style="left:318.3px;top:257px"><i style="background:#111"></i></div>
<span class="t" id="t56" style="left:327.9px;top:256px;">pixels</span>
<div class="rb" style="left:318.3px;top:267.3px"></div>
<span class="t" id="t57" style="left:327.9px;top:266.3px;">cm</span>
<div class="rb" style="left:318.3px;top:277.5px"></div>
<span class="t" id="t58" style="left:327.9px;top:276.5px;">inches</span>
<div class="rb" style="left:213px;top:267.3px"></div>
<span class="t" id="t59" style="left:222.3px;top:266.3px;">Set long side to:</span>
<div class="in dis" style="left:286.8px;top:265px;width:26.2px;height:11.3px;"></div>
<span class="t" id="t60" style="left:289px;top:265.35px;color:#8c8c8c;font-size:8.3px;">1280</span>
<div class="rb" style="left:213px;top:281.7px"></div>
<span class="t" id="t61" style="left:222.3px;top:280.7px;">Set short side to:</span>
<div class="in dis" style="left:286.8px;top:279.7px;width:26.2px;height:11.1px;"></div>
<span class="t" id="t62" style="left:289px;top:279.95px;color:#8c8c8c;font-size:8.3px;">768</span>
<div class="rb" style="left:213px;top:299px"></div>
<span class="t" id="t63" style="left:222.3px;top:298px;">Set image size to:</span>
<div class="in dis" style="left:286.8px;top:297px;width:26.2px;height:11.5px;"></div>
<span class="t" id="t64" style="left:289px;top:297.45px;color:#8c8c8c;font-size:8.3px;">4.53</span>
<span class="t" id="t65" style="left:317.7px;top:298px;">MegaPixel</span>
<div class="" style="left:200px;top:310px;width:128px;height:10px;background:#f0f0f0"></div>
<div class="rb" style="left:202.3px;top:311px"></div>
<span class="t" id="t66" style="left:212px;top:310px;">Set new size as percentage of original:</span>
<span class="t" id="t67" style="left:200.2px;top:323.3px;">Width:</span>
<div class="in dis" style="left:228.3px;top:322.5px;width:26.2px;height:11.7px;"></div>
<span class="t" id="t68" style="left:230.5px;top:323.05px;color:#8c8c8c;font-size:8.3px;">50.00</span>
<span class="t" id="t69" style="left:256px;top:323.3px;">%, Height:</span>
<div class="in dis" style="left:287px;top:322.5px;width:26px;height:11.7px;"></div>
<span class="t" id="t70" style="left:289.2px;top:323.05px;color:#8c8c8c;font-size:8.3px;">50.00</span>
<span class="t" id="t71" style="left:316px;top:323.3px;">%</span>
<div class="cb" style="left:201.7px;top:342.5px"><svg width="8.2" height="8.2" viewBox="0 0 8 8" style="position:absolute;left:-1px;top:-1px"><path d="M1.6 4.1 L3.3 5.9 L6.5 1.8" fill="none" stroke="#111" stroke-width="1.5"/></svg></div>
<span class="t" id="t72" style="left:212px;top:341.6px;">Preserve aspect ratio (proportional)</span>
<div class="cb" style="left:201.7px;top:356.1px"><svg width="8.2" height="8.2" viewBox="0 0 8 8" style="position:absolute;left:-1px;top:-1px"><path d="M1.6 4.1 L3.3 5.9 L6.5 1.8" fill="none" stroke="#111" stroke-width="1.5"/></svg></div>
<span class="t" id="t73" style="left:212px;top:355.2px;">Use Resample function (better quality)</span>
<div class="cb" style="left:201.7px;top:368.5px"></div>
<span class="t" id="t74" style="left:212px;top:367.6px;">Resize based only on new/old DPI value</span>
<div class="cb" style="left:201.7px;top:382.6px"><svg width="8.2" height="8.2" viewBox="0 0 8 8" style="position:absolute;left:-1px;top:-1px"><path d="M1.6 4.1 L3.3 5.9 L6.5 1.8" fill="none" stroke="#111" stroke-width="1.5"/></svg></div>
<span class="t" id="t75" style="left:212px;top:381.7px;">Don't enlarge smaller images</span>
<div class="cb" style="left:201.7px;top:395.7px"></div>
<span class="t" id="t76" style="left:212px;top:394.8px;">Don't shrink bigger images</span>
<span class="t" id="t77" style="left:201.8px;top:410px;">Set new DPI value:</span>
<div class="in" style="left:286.5px;top:409.4px;width:26.1px;height:12.1px;"></div>
<div class="gb" style="left:356px;top:132px;width:158px;height:99px;"></div>
<div class="" style="left:360px;top:127px;width:94px;height:10px;background:#f0f0f0"></div>
<div class="cb" style="left:361.7px;top:127.9px"></div>
<span class="t" id="t78" style="left:371.3px;top:127px;">CHANGE COLOR DEPTH:</span>
<div class="rb dis" style="left:361.7px;top:142px"></div>
<span class="t" id="t79" style="left:372px;top:141px;color:#8c8c8c;">16.7 Million colors (24 BPP)</span>
<div class="rb dis" style="left:361.7px;top:154.3px"></div>
<span class="t" id="t80" style="left:372px;top:153.3px;color:#8c8c8c;">256 Colors (8 BPP)</span>
<div class="rb dis" style="left:361.7px;top:166.4px"></div>
<span class="t" id="t81" style="left:372px;top:165.4px;color:#8c8c8c;">16 Colors (4 BPP)</span>
<div class="rb dis" style="left:361.7px;top:179.2px"><i style="background:#8a8a8a"></i></div>
<span class="t" id="t82" style="left:372px;top:178.2px;color:#6a6a6a;">2 Colors (black/white) (1 BPP)</span>
<div class="rb dis" style="left:361.7px;top:191.5px"></div>
<span class="t" id="t83" style="left:372px;top:190.5px;color:#8c8c8c;">Custom colors:</span>
<div class="in dis" style="left:420.2px;top:189.8px;width:26.6px;height:11.5px;"></div>
<span class="t" id="t84" style="left:448.5px;top:190.5px;">(2 - 256)</span>
<div class="cb dis" style="left:361.7px;top:205.9px"><svg width="8.2" height="8.2" viewBox="0 0 8 8" style="position:absolute;left:-1px;top:-1px"><path d="M1.6 4.1 L3.3 5.9 L6.5 1.8" fill="none" stroke="#9a9a9a" stroke-width="1.5"/></svg></div>
<span class="t" id="t85" style="left:372px;top:205px;color:#8c8c8c;">Use Floyd-Steinberg dithering</span>
<div class="cb dis" style="left:361.7px;top:218.9px"><svg width="8.2" height="8.2" viewBox="0 0 8 8" style="position:absolute;left:-1px;top:-1px"><path d="M1.6 4.1 L3.3 5.9 L6.5 1.8" fill="none" stroke="#9a9a9a" stroke-width="1.5"/></svg></div>
<span class="t" id="t86" style="left:372px;top:218px;color:#8c8c8c;">Use best color quality (slower for large images)</span>
<div class="gb" style="left:356px;top:236.5px;width:158px;height:196.5px;"></div>
<div class="cb foc" style="left:361.7px;top:242.4px"><svg width="8.2" height="8.2" viewBox="0 0 8 8" style="position:absolute;left:-1px;top:-1px"><path d="M1.6 4.1 L3.3 5.9 L6.5 1.8" fill="none" stroke="#111" stroke-width="1.5"/></svg></div>
<span class="t" id="t87" style="left:372px;top:241.5px;">Auto adjust colors</span>
<div class="" style="left:370.8px;top:241.3px;width:55.2px;height:10.7px;border:1px dotted #555"></div>
<div class="cb" style="left:361.2px;top:255.7px"></div>
<span class="t" id="t88" style="left:372px;top:254.8px;">Horizontal flip</span>
<div class="cb" style="left:361.2px;top:269.7px"></div>
<span class="t" id="t89" style="left:372px;top:268.8px;">Vertical flip</span>
<div class="cb" style="left:361.2px;top:283.9px"></div>
<span class="t" id="t90" style="left:372px;top:283px;">Rotate left</span>
<div class="cb" style="left:361.2px;top:296.8px"></div>
<span class="t" id="t91" style="left:372px;top:295.9px;">Rotate right</span>
<div class="cb" style="left:361.2px;top:310px"></div>
<span class="t" id="t92" style="left:372px;top:309.1px;">Convert to grayscale</span>
<div class="cb" style="left:361.2px;top:323.2px"></div>
<span class="t" id="t93" style="left:372px;top:322.3px;">Negative</span>
<div class="cb" style="left:361.2px;top:336.4px"></div>
<span class="t" id="t94" style="left:372px;top:335.5px;">Auto crop borders</span>
<div class="cb" style="left:361.2px;top:351.3px"></div>
<span class="t" id="t95" style="left:372px;top:350.4px;">Canvas size</span>
<div class="cb" style="left:361.2px;top:367.3px"></div>
<span class="t" id="t96" style="left:372px;top:366.4px;">Add overlay text</span>
<div class="cb" style="left:361.2px;top:382px"></div>
<span class="t" id="t97" style="left:372px;top:381.1px;">Add watermark image</span>
<div class="cb" style="left:361.2px;top:397.3px"></div>
<span class="t" id="t98" style="left:372px;top:396.4px;">Replace color</span>
<div class="btn dis" style="left:447px;top:349.6px;width:57.5px;height:11px;"></div>
<span class="t bt dist" id="t99" style="left:447px;top:350.1px;width:57.5px;">Settings</span>
<div class="btn dis" style="left:447px;top:365.7px;width:57.5px;height:10.9px;"></div>
<span class="t bt dist" id="t100" style="left:447px;top:366.15px;width:57.5px;">Settings</span>
<div class="btn dis" style="left:447px;top:380.6px;width:57.5px;height:10.8px;"></div>
<span class="t bt dist" id="t101" style="left:447px;top:381px;width:57.5px;">Settings</span>
<div class="btn dis" style="left:447px;top:396.3px;width:57.5px;height:10.9px;"></div>
<span class="t bt dist" id="t102" style="left:447px;top:396.75px;width:57.5px;">Settings</span>
<span class="t" id="t103" style="left:361.5px;top:409.3px;">RGB to:</span>
<div class="cb" style="left:361.2px;top:420.5px"></div>
<span class="t" id="t104" style="left:371.2px;top:419.6px;">RBG</span>
<div class="cb" style="left:391.4px;top:420.5px"></div>
<span class="t" id="t105" style="left:401.4px;top:419.6px;">BGR</span>
<div class="cb" style="left:422px;top:420.5px"></div>
<span class="t" id="t106" style="left:432px;top:419.6px;">BRG</span>
<div class="cb" style="left:453px;top:420.5px"></div>
<span class="t" id="t107" style="left:463px;top:419.6px;">GRB</span>
<div class="cb" style="left:483.6px;top:420.5px"></div>
<span class="t" id="t108" style="left:493.6px;top:419.6px;">GBR</span>
<div class="gb" style="left:518px;top:131px;width:158px;height:164px;"></div>
<div class="cb" style="left:525.3px;top:137.2px"></div>
<span class="t" id="t109" style="left:535px;top:136.3px;">Sharpen:</span>
<div class="in" style="left:595px;top:134.9px;width:25.8px;height:11.8px;"></div>
<span class="t" id="t110" style="left:597.2px;top:135.5px;font-size:8.3px;">66</span>
<span class="t" id="t111" style="left:623.6px;top:136.3px;">(1  -  99)</span>
<div class="cb" style="left:525.3px;top:151.5px"></div>
<span class="t" id="t112" style="left:535px;top:150.6px;">Brightness:</span>
<div class="in" style="left:595px;top:149.2px;width:25.8px;height:11.8px;"></div>
<span class="t" id="t113" style="left:623.6px;top:150.6px;">(-255 -  255)</span>
<div class="cb" style="left:525.3px;top:165.8px"></div>
<span class="t" id="t114" style="left:535px;top:164.9px;">Contrast:</span>
<div class="in" style="left:595px;top:163.5px;width:25.8px;height:11.8px;"></div>
<span class="t" id="t115" style="left:597.2px;top:164.1px;font-size:8.3px;">-72</span>
<span class="t" id="t116" style="left:623.6px;top:164.9px;">(-127 -  127)</span>
<div class="cb" style="left:525.3px;top:180.1px"></div>
<span class="t" id="t117" style="left:535px;top:179.2px;">Gamma correction:</span>
<div class="in" style="left:595px;top:177.8px;width:25.8px;height:11.8px;"></div>
<span class="t" id="t118" style="left:597.2px;top:178.4px;font-size:8.3px;">1.62</span>
<span class="t" id="t119" style="left:623.6px;top:179.2px;">(0.01 -  6.99)</span>
<div class="cb" style="left:525.3px;top:194.4px"></div>
<span class="t" id="t120" style="left:535px;top:193.5px;">Saturation</span>
<div class="in" style="left:595px;top:192.1px;width:25.8px;height:11.8px;"></div>
<span class="t" id="t121" style="left:623.6px;top:193.5px;">(-255 -  255)</span>
<div class="cb" style="left:525.3px;top:208.7px"></div>
<span class="t" id="t122" style="left:535px;top:207.8px;">Color balance - R:</span>
<div class="in" style="left:595px;top:206.4px;width:25.8px;height:11.8px;"></div>
<span class="t" id="t123" style="left:597.2px;top:207px;font-size:8.3px;">-10</span>
<span class="t" id="t124" style="left:623.6px;top:207.8px;">(-255 -  255)</span>
<div class="cb" style="left:525.3px;top:223px"></div>
<span class="t" id="t125" style="left:535px;top:222.1px;">Color balance - G:</span>
<div class="in" style="left:595px;top:220.7px;width:25.8px;height:11.8px;"></div>
<span class="t" id="t126" style="left:597.2px;top:221.3px;font-size:8.3px;">30</span>
<span class="t" id="t127" style="left:623.6px;top:222.1px;">(-255 -  255)</span>
<div class="cb" style="left:525.3px;top:237.3px"></div>
<span class="t" id="t128" style="left:535px;top:236.4px;">Color balance - B:</span>
<div class="in" style="left:595px;top:235px;width:25.8px;height:11.8px;"></div>
<span class="t" id="t129" style="left:597.2px;top:235.6px;font-size:8.3px;">30</span>
<span class="t" id="t130" style="left:623.6px;top:236.4px;">(-255 -  255)</span>
<div class="cb" style="left:525.3px;top:251.6px"></div>
<span class="t" id="t131" style="left:535px;top:250.7px;">Blur filter:</span>
<div class="in" style="left:595px;top:249.3px;width:25.8px;height:11.8px;"></div>
<span class="t" id="t132" style="left:597.2px;top:249.9px;font-size:8.3px;">1</span>
<span class="t" id="t133" style="left:623.6px;top:250.7px;">(1  -  99)</span>
<div class="cb" style="left:525.3px;top:265.9px"></div>
<span class="t" id="t134" style="left:535px;top:265px;">Median filter:</span>
<div class="in" style="left:595px;top:263.6px;width:25.8px;height:11.8px;"></div>
<span class="t" id="t135" style="left:597.2px;top:264.2px;font-size:8.3px;">3</span>
<span class="t" id="t136" style="left:623.6px;top:265px;">(3  -  9)</span>
<div class="cb" style="left:525.3px;top:280.2px"></div>
<span class="t" id="t137" style="left:535px;top:279.3px;">Fine rotation:</span>
<div class="in" style="left:595px;top:277.9px;width:25.8px;height:11.8px;"></div>
<span class="t" id="t138" style="left:623.6px;top:279.3px;">(-360.0  -  360.0)</span>
<div class="gb" style="left:518px;top:303px;width:158px;height:93.5px;"></div>
<div class="" style="left:521px;top:298px;width:62px;height:10px;background:#f0f0f0"></div>
<span class="t" id="t139" style="left:523px;top:297.8px;">MISCELLANEOUS:</span>
<div class="cb" style="left:525.3px;top:312.7px"><svg width="8.2" height="8.2" viewBox="0 0 8 8" style="position:absolute;left:-1px;top:-1px"><path d="M1.6 4.1 L3.3 5.9 L6.5 1.8" fill="none" stroke="#111" stroke-width="1.5"/></svg></div>
<span class="t" id="t140" style="left:535px;top:311.8px;">Overwrite existing files</span>
<div class="cb" style="left:525.3px;top:326.5px"></div>
<span class="t" id="t141" style="left:535px;top:325.6px;">Delete original files after conversion</span>
<div class="cb" style="left:525.3px;top:339.7px"></div>
<span class="t" id="t142" style="left:535px;top:338.8px;">Create subfolders in destination folder</span>
<div class="cb" style="left:525.3px;top:353.1px"></div>
<span class="t" id="t143" style="left:535px;top:352.2px;">Save files with original date/time</span>
<div class="cb" style="left:525.3px;top:366.8px"><svg width="8.2" height="8.2" viewBox="0 0 8 8" style="position:absolute;left:-1px;top:-1px"><path d="M1.6 4.1 L3.3 5.9 L6.5 1.8" fill="none" stroke="#111" stroke-width="1.5"/></svg></div>
<span class="t" id="t144" style="left:535px;top:365.9px;">Apply changes to all pages (TIF/PDF saving)</span>
<div class="cb" style="left:525.3px;top:381.6px"></div>
<span class="t" id="t145" style="left:535px;top:380.7px;">Custom processing order</span>
<div class="btn dis" style="left:613px;top:379.8px;width:57px;height:11.5px;"></div>
<span class="t bt dist" id="t146" style="left:613px;top:380.55px;width:57px;">Change order</span>
<div class="btn" style="left:529.6px;top:401px;width:58.7px;height:12.4px;"></div>
<span class="t bt" id="t147" style="left:529.6px;top:402.2px;width:58.7px;">Load settings</span>
<div class="btn" style="left:604px;top:401px;width:58.8px;height:12.4px;"></div>
<span class="t bt" id="t148" style="left:604px;top:402.2px;width:58.8px;">Save settings</span>
<div class="btn def" style="left:529.6px;top:420.2px;width:58.7px;height:12.8px;"></div>
<span class="t bt" id="t149" style="left:529.6px;top:421.6px;width:58.7px;">OK</span>
<div class="btn" style="left:604px;top:420.2px;width:58.8px;height:12.8px;"></div>
<span class="t bt" id="t150" style="left:604px;top:421.6px;width:58.8px;">Cancel</span>
</div>
</body></html>
